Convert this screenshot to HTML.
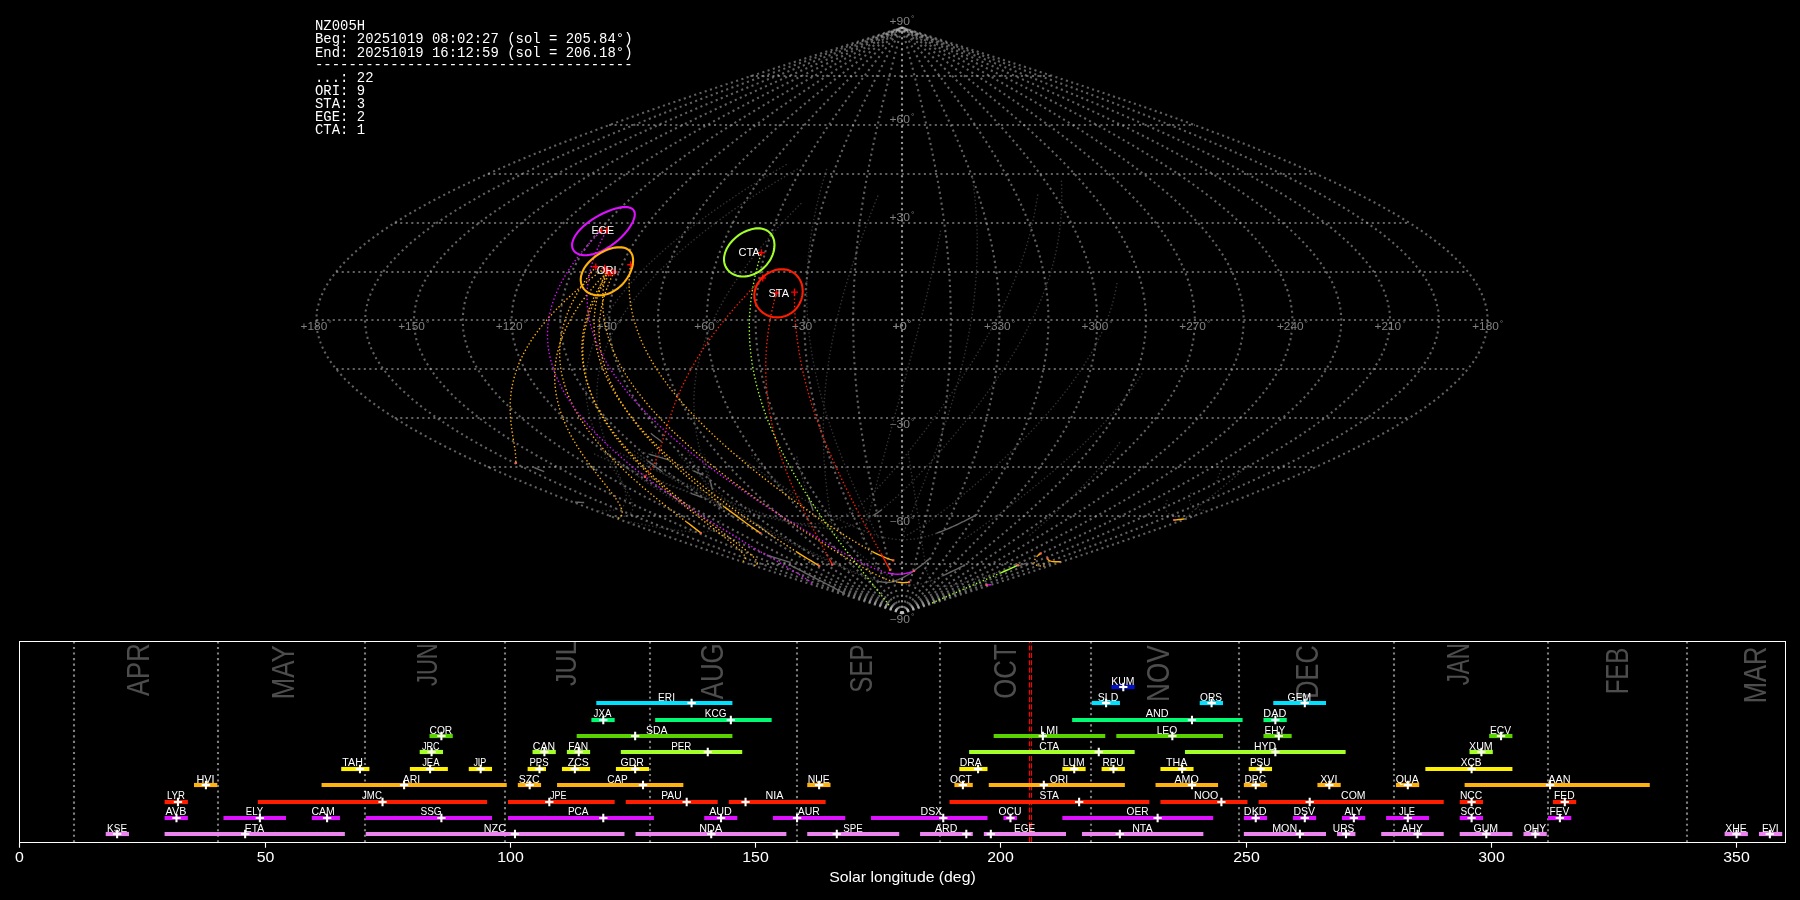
<!DOCTYPE html>
<html><head><meta charset="utf-8"><title>NZ005H shower association</title>
<style>html,body{margin:0;padding:0;background:#000;}svg{display:block}</style></head>
<body><svg width="1800" height="900" viewBox="0 0 1800 900" style="will-change:transform">
<rect width="1800" height="900" fill="#000"/>
<g fill="none" stroke="#c0c0c0" stroke-opacity="0.5" stroke-width="2.083" stroke-dasharray="2.083 3.437">
<path d="M902.00,613.30 L871.34,603.53 L840.77,593.77 L810.36,584.01 L780.21,574.24 L750.39,564.48 L720.98,554.72 L692.07,544.95 L663.74,535.19 L636.06,525.43 L609.10,515.66 L582.95,505.90 L557.68,496.14 L533.35,486.37 L510.03,476.61 L487.78,466.85 L466.67,457.08 L446.75,447.32 L428.08,437.56 L410.71,427.80 L394.69,418.03 L380.06,408.27 L366.85,398.51 L355.12,388.74 L344.88,378.98 L336.17,369.22 L329.01,359.45 L323.42,349.69 L319.42,339.93 L317.01,330.16 L316.21,320.40 L317.01,310.64 L319.42,300.87 L323.42,291.11 L329.01,281.35 L336.17,271.58 L344.88,261.82 L355.12,252.06 L366.85,242.29 L380.06,232.53 L394.69,222.77 L410.71,213.00 L428.08,203.24 L446.75,193.48 L466.67,183.72 L487.78,173.95 L510.03,164.19 L533.35,154.43 L557.68,144.66 L582.95,134.90 L609.10,125.14 L636.06,115.37 L663.74,105.61 L692.07,95.85 L720.98,86.08 L750.39,76.32 L780.21,66.56 L810.36,56.79 L840.77,47.03 L871.34,37.27 L902.00,27.50"/>
<path d="M902.00,613.30 L873.90,603.53 L845.87,593.77 L818.00,584.01 L790.36,574.24 L763.02,564.48 L736.07,554.72 L709.57,544.95 L683.59,535.19 L658.22,525.43 L633.51,515.66 L609.54,505.90 L586.37,496.14 L564.07,486.37 L542.69,476.61 L522.30,466.85 L502.95,457.08 L484.69,447.32 L467.58,437.56 L451.65,427.80 L436.97,418.03 L423.55,408.27 L411.45,398.51 L400.69,388.74 L391.31,378.98 L383.32,369.22 L376.76,359.45 L371.64,349.69 L367.97,339.93 L365.76,330.16 L365.02,320.40 L365.76,310.64 L367.97,300.87 L371.64,291.11 L376.76,281.35 L383.32,271.58 L391.31,261.82 L400.69,252.06 L411.45,242.29 L423.55,232.53 L436.97,222.77 L451.65,213.00 L467.58,203.24 L484.69,193.48 L502.95,183.72 L522.30,173.95 L542.69,164.19 L564.07,154.43 L586.37,144.66 L609.54,134.90 L633.51,125.14 L658.22,115.37 L683.59,105.61 L709.57,95.85 L736.07,86.08 L763.02,76.32 L790.36,66.56 L818.00,56.79 L845.87,47.03 L873.90,37.27 L902.00,27.50"/>
<path d="M902.00,613.30 L876.45,603.53 L850.97,593.77 L825.63,584.01 L800.51,574.24 L775.65,564.48 L751.15,554.72 L727.06,544.95 L703.45,535.19 L680.38,525.43 L657.92,515.66 L636.13,505.90 L615.07,496.14 L594.79,486.37 L575.36,476.61 L556.82,466.85 L539.23,457.08 L522.63,447.32 L507.07,437.56 L492.59,427.80 L479.24,418.03 L467.05,408.27 L456.04,398.51 L446.26,388.74 L437.73,378.98 L430.47,369.22 L424.51,359.45 L419.85,349.69 L416.51,339.93 L414.51,330.16 L413.84,320.40 L414.51,310.64 L416.51,300.87 L419.85,291.11 L424.51,281.35 L430.47,271.58 L437.73,261.82 L446.26,252.06 L456.04,242.29 L467.05,232.53 L479.24,222.77 L492.59,213.00 L507.07,203.24 L522.63,193.48 L539.23,183.72 L556.82,173.95 L575.36,164.19 L594.79,154.43 L615.07,144.66 L636.13,134.90 L657.92,125.14 L680.38,115.37 L703.45,105.61 L727.06,95.85 L751.15,86.08 L775.65,76.32 L800.51,66.56 L825.63,56.79 L850.97,47.03 L876.45,37.27 L902.00,27.50"/>
<path d="M902.00,613.30 L879.01,603.53 L856.08,593.77 L833.27,584.01 L810.66,574.24 L788.29,564.48 L766.24,554.72 L744.55,544.95 L723.30,535.19 L702.54,525.43 L682.33,515.66 L662.72,505.90 L643.76,496.14 L625.51,486.37 L608.02,476.61 L591.34,466.85 L575.50,457.08 L560.57,447.32 L546.56,437.56 L533.54,427.80 L521.52,418.03 L510.54,408.27 L500.64,398.51 L491.84,388.74 L484.16,378.98 L477.63,369.22 L472.26,359.45 L468.07,349.69 L465.06,339.93 L463.26,330.16 L462.66,320.40 L463.26,310.64 L465.06,300.87 L468.07,291.11 L472.26,281.35 L477.63,271.58 L484.16,261.82 L491.84,252.06 L500.64,242.29 L510.54,232.53 L521.52,222.77 L533.54,213.00 L546.56,203.24 L560.57,193.48 L575.50,183.72 L591.34,173.95 L608.02,164.19 L625.51,154.43 L643.76,144.66 L662.72,134.90 L682.33,125.14 L702.54,115.37 L723.30,105.61 L744.55,95.85 L766.24,86.08 L788.29,76.32 L810.66,66.56 L833.27,56.79 L856.08,47.03 L879.01,37.27 L902.00,27.50"/>
<path d="M902.00,613.30 L881.56,603.53 L861.18,593.77 L840.91,584.01 L820.80,574.24 L800.92,564.48 L781.32,554.72 L762.05,544.95 L743.16,535.19 L724.70,525.43 L706.74,515.66 L689.30,505.90 L672.45,496.14 L656.23,486.37 L640.69,476.61 L625.86,466.85 L611.78,457.08 L598.50,447.32 L586.06,437.56 L574.48,427.80 L563.79,418.03 L554.04,408.27 L545.23,398.51 L537.41,388.74 L530.59,378.98 L524.78,369.22 L520.01,359.45 L516.28,349.69 L513.61,339.93 L512.01,330.16 L511.47,320.40 L512.01,310.64 L513.61,300.87 L516.28,291.11 L520.01,281.35 L524.78,271.58 L530.59,261.82 L537.41,252.06 L545.23,242.29 L554.04,232.53 L563.79,222.77 L574.48,213.00 L586.06,203.24 L598.50,193.48 L611.78,183.72 L625.86,173.95 L640.69,164.19 L656.23,154.43 L672.45,144.66 L689.30,134.90 L706.74,125.14 L724.70,115.37 L743.16,105.61 L762.05,95.85 L781.32,86.08 L800.92,76.32 L820.80,66.56 L840.91,56.79 L861.18,47.03 L881.56,37.27 L902.00,27.50"/>
<path d="M902.00,613.30 L884.12,603.53 L866.28,593.77 L848.54,584.01 L830.95,574.24 L813.56,564.48 L796.41,554.72 L779.54,544.95 L763.01,535.19 L746.87,525.43 L731.14,515.66 L715.89,505.90 L701.15,496.14 L686.95,486.37 L673.35,476.61 L660.37,466.85 L648.06,457.08 L636.44,447.32 L625.55,437.56 L615.42,427.80 L606.07,418.03 L597.53,408.27 L589.83,398.51 L582.98,388.74 L577.01,378.98 L571.93,369.22 L567.76,359.45 L564.50,349.69 L562.16,339.93 L560.76,330.16 L560.29,320.40 L560.76,310.64 L562.16,300.87 L564.50,291.11 L567.76,281.35 L571.93,271.58 L577.01,261.82 L582.98,252.06 L589.83,242.29 L597.53,232.53 L606.07,222.77 L615.42,213.00 L625.55,203.24 L636.44,193.48 L648.06,183.72 L660.37,173.95 L673.35,164.19 L686.95,154.43 L701.15,144.66 L715.89,134.90 L731.14,125.14 L746.87,115.37 L763.01,105.61 L779.54,95.85 L796.41,86.08 L813.56,76.32 L830.95,66.56 L848.54,56.79 L866.28,47.03 L884.12,37.27 L902.00,27.50"/>
<path d="M902.00,613.30 L886.67,603.53 L871.38,593.77 L856.18,584.01 L841.10,574.24 L826.19,564.48 L811.49,554.72 L797.04,544.95 L782.87,535.19 L769.03,525.43 L755.55,515.66 L742.48,505.90 L729.84,496.14 L717.67,486.37 L706.01,476.61 L694.89,466.85 L684.34,457.08 L674.38,447.32 L665.04,437.56 L656.36,427.80 L648.34,418.03 L641.03,408.27 L634.43,398.51 L628.56,388.74 L623.44,378.98 L619.08,369.22 L615.50,359.45 L612.71,349.69 L610.71,339.93 L609.51,330.16 L609.10,320.40 L609.51,310.64 L610.71,300.87 L612.71,291.11 L615.50,281.35 L619.08,271.58 L623.44,261.82 L628.56,252.06 L634.43,242.29 L641.03,232.53 L648.34,222.77 L656.36,213.00 L665.04,203.24 L674.38,193.48 L684.34,183.72 L694.89,173.95 L706.01,164.19 L717.67,154.43 L729.84,144.66 L742.48,134.90 L755.55,125.14 L769.03,115.37 L782.87,105.61 L797.04,95.85 L811.49,86.08 L826.19,76.32 L841.10,66.56 L856.18,56.79 L871.38,47.03 L886.67,37.27 L902.00,27.50"/>
<path d="M902.00,613.30 L889.23,603.53 L876.49,593.77 L863.82,584.01 L851.25,574.24 L838.83,564.48 L826.58,554.72 L814.53,544.95 L802.72,535.19 L791.19,525.43 L779.96,515.66 L769.06,505.90 L758.53,496.14 L748.40,486.37 L738.68,476.61 L729.41,466.85 L720.61,457.08 L712.31,447.32 L704.54,437.56 L697.30,427.80 L690.62,418.03 L684.52,408.27 L679.02,398.51 L674.13,388.74 L669.87,378.98 L666.24,369.22 L663.25,359.45 L660.93,349.69 L659.26,339.93 L658.25,330.16 L657.92,320.40 L658.25,310.64 L659.26,300.87 L660.93,291.11 L663.25,281.35 L666.24,271.58 L669.87,261.82 L674.13,252.06 L679.02,242.29 L684.52,232.53 L690.62,222.77 L697.30,213.00 L704.54,203.24 L712.31,193.48 L720.61,183.72 L729.41,173.95 L738.68,164.19 L748.40,154.43 L758.53,144.66 L769.06,134.90 L779.96,125.14 L791.19,115.37 L802.72,105.61 L814.53,95.85 L826.58,86.08 L838.83,76.32 L851.25,66.56 L863.82,56.79 L876.49,47.03 L889.23,37.27 L902.00,27.50"/>
<path d="M902.00,613.30 L891.78,603.53 L881.59,593.77 L871.45,584.01 L861.40,574.24 L851.46,564.48 L841.66,554.72 L832.02,544.95 L822.58,535.19 L813.35,525.43 L804.37,515.66 L795.65,505.90 L787.23,496.14 L779.12,486.37 L771.34,476.61 L763.93,466.85 L756.89,457.08 L750.25,447.32 L744.03,437.56 L738.24,427.80 L732.90,418.03 L728.02,408.27 L723.62,398.51 L719.71,388.74 L716.29,378.98 L713.39,369.22 L711.00,359.45 L709.14,349.69 L707.81,339.93 L707.00,330.16 L706.74,320.40 L707.00,310.64 L707.81,300.87 L709.14,291.11 L711.00,281.35 L713.39,271.58 L716.29,261.82 L719.71,252.06 L723.62,242.29 L728.02,232.53 L732.90,222.77 L738.24,213.00 L744.03,203.24 L750.25,193.48 L756.89,183.72 L763.93,173.95 L771.34,164.19 L779.12,154.43 L787.23,144.66 L795.65,134.90 L804.37,125.14 L813.35,115.37 L822.58,105.61 L832.02,95.85 L841.66,86.08 L851.46,76.32 L861.40,66.56 L871.45,56.79 L881.59,47.03 L891.78,37.27 L902.00,27.50"/>
<path d="M902.00,613.30 L894.34,603.53 L886.69,593.77 L879.09,584.01 L871.55,574.24 L864.10,564.48 L856.75,554.72 L849.52,544.95 L842.43,535.19 L835.51,525.43 L828.78,515.66 L822.24,505.90 L815.92,496.14 L809.84,486.37 L804.01,476.61 L798.45,466.85 L793.17,457.08 L788.19,447.32 L783.52,437.56 L779.18,427.80 L775.17,418.03 L771.51,408.27 L768.21,398.51 L765.28,388.74 L762.72,378.98 L760.54,369.22 L758.75,359.45 L757.36,349.69 L756.35,339.93 L755.75,330.16 L755.55,320.40 L755.75,310.64 L756.35,300.87 L757.36,291.11 L758.75,281.35 L760.54,271.58 L762.72,261.82 L765.28,252.06 L768.21,242.29 L771.51,232.53 L775.17,222.77 L779.18,213.00 L783.52,203.24 L788.19,193.48 L793.17,183.72 L798.45,173.95 L804.01,164.19 L809.84,154.43 L815.92,144.66 L822.24,134.90 L828.78,125.14 L835.51,115.37 L842.43,105.61 L849.52,95.85 L856.75,86.08 L864.10,76.32 L871.55,66.56 L879.09,56.79 L886.69,47.03 L894.34,37.27 L902.00,27.50"/>
<path d="M902.00,613.30 L896.89,603.53 L891.79,593.77 L886.73,584.01 L881.70,574.24 L876.73,564.48 L871.83,554.72 L867.01,544.95 L862.29,535.19 L857.68,525.43 L853.18,515.66 L848.83,505.90 L844.61,496.14 L840.56,486.37 L836.67,476.61 L832.96,466.85 L829.45,457.08 L826.13,447.32 L823.01,437.56 L820.12,427.80 L817.45,418.03 L815.01,408.27 L812.81,398.51 L810.85,388.74 L809.15,378.98 L807.69,369.22 L806.50,359.45 L805.57,349.69 L804.90,339.93 L804.50,330.16 L804.37,320.40 L804.50,310.64 L804.90,300.87 L805.57,291.11 L806.50,281.35 L807.69,271.58 L809.15,261.82 L810.85,252.06 L812.81,242.29 L815.01,232.53 L817.45,222.77 L820.12,213.00 L823.01,203.24 L826.13,193.48 L829.45,183.72 L832.96,173.95 L836.67,164.19 L840.56,154.43 L844.61,144.66 L848.83,134.90 L853.18,125.14 L857.68,115.37 L862.29,105.61 L867.01,95.85 L871.83,86.08 L876.73,76.32 L881.70,66.56 L886.73,56.79 L891.79,47.03 L896.89,37.27 L902.00,27.50"/>
<path d="M902.00,613.30 L899.45,603.53 L896.90,593.77 L894.36,584.01 L891.85,574.24 L889.37,564.48 L886.92,554.72 L884.51,544.95 L882.14,535.19 L879.84,525.43 L877.59,515.66 L875.41,505.90 L873.31,496.14 L871.28,486.37 L869.34,476.61 L867.48,466.85 L865.72,457.08 L864.06,447.32 L862.51,437.56 L861.06,427.80 L859.72,418.03 L858.50,408.27 L857.40,398.51 L856.43,388.74 L855.57,378.98 L854.85,369.22 L854.25,359.45 L853.79,349.69 L853.45,339.93 L853.25,330.16 L853.18,320.40 L853.25,310.64 L853.45,300.87 L853.79,291.11 L854.25,281.35 L854.85,271.58 L855.57,261.82 L856.43,252.06 L857.40,242.29 L858.50,232.53 L859.72,222.77 L861.06,213.00 L862.51,203.24 L864.06,193.48 L865.72,183.72 L867.48,173.95 L869.34,164.19 L871.28,154.43 L873.31,144.66 L875.41,134.90 L877.59,125.14 L879.84,115.37 L882.14,105.61 L884.51,95.85 L886.92,86.08 L889.37,76.32 L891.85,66.56 L894.36,56.79 L896.90,47.03 L899.45,37.27 L902.00,27.50"/>
<path d="M902.00,613.30 L902.00,603.53 L902.00,593.77 L902.00,584.01 L902.00,574.24 L902.00,564.48 L902.00,554.72 L902.00,544.95 L902.00,535.19 L902.00,525.43 L902.00,515.66 L902.00,505.90 L902.00,496.14 L902.00,486.37 L902.00,476.61 L902.00,466.85 L902.00,457.08 L902.00,447.32 L902.00,437.56 L902.00,427.80 L902.00,418.03 L902.00,408.27 L902.00,398.51 L902.00,388.74 L902.00,378.98 L902.00,369.22 L902.00,359.45 L902.00,349.69 L902.00,339.93 L902.00,330.16 L902.00,320.40 L902.00,310.64 L902.00,300.87 L902.00,291.11 L902.00,281.35 L902.00,271.58 L902.00,261.82 L902.00,252.06 L902.00,242.29 L902.00,232.53 L902.00,222.77 L902.00,213.00 L902.00,203.24 L902.00,193.48 L902.00,183.72 L902.00,173.95 L902.00,164.19 L902.00,154.43 L902.00,144.66 L902.00,134.90 L902.00,125.14 L902.00,115.37 L902.00,105.61 L902.00,95.85 L902.00,86.08 L902.00,76.32 L902.00,66.56 L902.00,56.79 L902.00,47.03 L902.00,37.27 L902.00,27.50"/>
<path d="M902.00,613.30 L904.55,603.53 L907.10,593.77 L909.64,584.01 L912.15,574.24 L914.63,564.48 L917.08,554.72 L919.49,544.95 L921.86,535.19 L924.16,525.43 L926.41,515.66 L928.59,505.90 L930.69,496.14 L932.72,486.37 L934.66,476.61 L936.52,466.85 L938.28,457.08 L939.94,447.32 L941.49,437.56 L942.94,427.80 L944.28,418.03 L945.50,408.27 L946.60,398.51 L947.57,388.74 L948.43,378.98 L949.15,369.22 L949.75,359.45 L950.21,349.69 L950.55,339.93 L950.75,330.16 L950.82,320.40 L950.75,310.64 L950.55,300.87 L950.21,291.11 L949.75,281.35 L949.15,271.58 L948.43,261.82 L947.57,252.06 L946.60,242.29 L945.50,232.53 L944.28,222.77 L942.94,213.00 L941.49,203.24 L939.94,193.48 L938.28,183.72 L936.52,173.95 L934.66,164.19 L932.72,154.43 L930.69,144.66 L928.59,134.90 L926.41,125.14 L924.16,115.37 L921.86,105.61 L919.49,95.85 L917.08,86.08 L914.63,76.32 L912.15,66.56 L909.64,56.79 L907.10,47.03 L904.55,37.27 L902.00,27.50"/>
<path d="M902.00,613.30 L907.11,603.53 L912.21,593.77 L917.27,584.01 L922.30,574.24 L927.27,564.48 L932.17,554.72 L936.99,544.95 L941.71,535.19 L946.32,525.43 L950.82,515.66 L955.17,505.90 L959.39,496.14 L963.44,486.37 L967.33,476.61 L971.04,466.85 L974.55,457.08 L977.87,447.32 L980.99,437.56 L983.88,427.80 L986.55,418.03 L988.99,408.27 L991.19,398.51 L993.15,388.74 L994.85,378.98 L996.31,369.22 L997.50,359.45 L998.43,349.69 L999.10,339.93 L999.50,330.16 L999.63,320.40 L999.50,310.64 L999.10,300.87 L998.43,291.11 L997.50,281.35 L996.31,271.58 L994.85,261.82 L993.15,252.06 L991.19,242.29 L988.99,232.53 L986.55,222.77 L983.88,213.00 L980.99,203.24 L977.87,193.48 L974.55,183.72 L971.04,173.95 L967.33,164.19 L963.44,154.43 L959.39,144.66 L955.17,134.90 L950.82,125.14 L946.32,115.37 L941.71,105.61 L936.99,95.85 L932.17,86.08 L927.27,76.32 L922.30,66.56 L917.27,56.79 L912.21,47.03 L907.11,37.27 L902.00,27.50"/>
<path d="M902.00,613.30 L909.66,603.53 L917.31,593.77 L924.91,584.01 L932.45,574.24 L939.90,564.48 L947.25,554.72 L954.48,544.95 L961.57,535.19 L968.49,525.43 L975.22,515.66 L981.76,505.90 L988.08,496.14 L994.16,486.37 L999.99,476.61 L1005.55,466.85 L1010.83,457.08 L1015.81,447.32 L1020.48,437.56 L1024.82,427.80 L1028.83,418.03 L1032.49,408.27 L1035.79,398.51 L1038.72,388.74 L1041.28,378.98 L1043.46,369.22 L1045.25,359.45 L1046.64,349.69 L1047.65,339.93 L1048.25,330.16 L1048.45,320.40 L1048.25,310.64 L1047.65,300.87 L1046.64,291.11 L1045.25,281.35 L1043.46,271.58 L1041.28,261.82 L1038.72,252.06 L1035.79,242.29 L1032.49,232.53 L1028.83,222.77 L1024.82,213.00 L1020.48,203.24 L1015.81,193.48 L1010.83,183.72 L1005.55,173.95 L999.99,164.19 L994.16,154.43 L988.08,144.66 L981.76,134.90 L975.22,125.14 L968.49,115.37 L961.57,105.61 L954.48,95.85 L947.25,86.08 L939.90,76.32 L932.45,66.56 L924.91,56.79 L917.31,47.03 L909.66,37.27 L902.00,27.50"/>
<path d="M902.00,613.30 L912.22,603.53 L922.41,593.77 L932.55,584.01 L942.60,574.24 L952.54,564.48 L962.34,554.72 L971.98,544.95 L981.42,535.19 L990.65,525.43 L999.63,515.66 L1008.35,505.90 L1016.77,496.14 L1024.88,486.37 L1032.66,476.61 L1040.07,466.85 L1047.11,457.08 L1053.75,447.32 L1059.97,437.56 L1065.76,427.80 L1071.10,418.03 L1075.98,408.27 L1080.38,398.51 L1084.29,388.74 L1087.71,378.98 L1090.61,369.22 L1093.00,359.45 L1094.86,349.69 L1096.19,339.93 L1097.00,330.16 L1097.26,320.40 L1097.00,310.64 L1096.19,300.87 L1094.86,291.11 L1093.00,281.35 L1090.61,271.58 L1087.71,261.82 L1084.29,252.06 L1080.38,242.29 L1075.98,232.53 L1071.10,222.77 L1065.76,213.00 L1059.97,203.24 L1053.75,193.48 L1047.11,183.72 L1040.07,173.95 L1032.66,164.19 L1024.88,154.43 L1016.77,144.66 L1008.35,134.90 L999.63,125.14 L990.65,115.37 L981.42,105.61 L971.98,95.85 L962.34,86.08 L952.54,76.32 L942.60,66.56 L932.55,56.79 L922.41,47.03 L912.22,37.27 L902.00,27.50"/>
<path d="M902.00,613.30 L914.77,603.53 L927.51,593.77 L940.18,584.01 L952.75,574.24 L965.17,564.48 L977.42,554.72 L989.47,544.95 L1001.28,535.19 L1012.81,525.43 L1024.04,515.66 L1034.94,505.90 L1045.47,496.14 L1055.60,486.37 L1065.32,476.61 L1074.59,466.85 L1083.39,457.08 L1091.69,447.32 L1099.46,437.56 L1106.70,427.80 L1113.38,418.03 L1119.48,408.27 L1124.98,398.51 L1129.87,388.74 L1134.13,378.98 L1137.76,369.22 L1140.75,359.45 L1143.07,349.69 L1144.74,339.93 L1145.75,330.16 L1146.08,320.40 L1145.75,310.64 L1144.74,300.87 L1143.07,291.11 L1140.75,281.35 L1137.76,271.58 L1134.13,261.82 L1129.87,252.06 L1124.98,242.29 L1119.48,232.53 L1113.38,222.77 L1106.70,213.00 L1099.46,203.24 L1091.69,193.48 L1083.39,183.72 L1074.59,173.95 L1065.32,164.19 L1055.60,154.43 L1045.47,144.66 L1034.94,134.90 L1024.04,125.14 L1012.81,115.37 L1001.28,105.61 L989.47,95.85 L977.42,86.08 L965.17,76.32 L952.75,66.56 L940.18,56.79 L927.51,47.03 L914.77,37.27 L902.00,27.50"/>
<path d="M902.00,613.30 L917.33,603.53 L932.62,593.77 L947.82,584.01 L962.90,574.24 L977.81,564.48 L992.51,554.72 L1006.96,544.95 L1021.13,535.19 L1034.97,525.43 L1048.45,515.66 L1061.52,505.90 L1074.16,496.14 L1086.33,486.37 L1097.99,476.61 L1109.11,466.85 L1119.66,457.08 L1129.62,447.32 L1138.96,437.56 L1147.64,427.80 L1155.66,418.03 L1162.97,408.27 L1169.57,398.51 L1175.44,388.74 L1180.56,378.98 L1184.92,369.22 L1188.50,359.45 L1191.29,349.69 L1193.29,339.93 L1194.49,330.16 L1194.90,320.40 L1194.49,310.64 L1193.29,300.87 L1191.29,291.11 L1188.50,281.35 L1184.92,271.58 L1180.56,261.82 L1175.44,252.06 L1169.57,242.29 L1162.97,232.53 L1155.66,222.77 L1147.64,213.00 L1138.96,203.24 L1129.62,193.48 L1119.66,183.72 L1109.11,173.95 L1097.99,164.19 L1086.33,154.43 L1074.16,144.66 L1061.52,134.90 L1048.45,125.14 L1034.97,115.37 L1021.13,105.61 L1006.96,95.85 L992.51,86.08 L977.81,76.32 L962.90,66.56 L947.82,56.79 L932.62,47.03 L917.33,37.27 L902.00,27.50"/>
<path d="M902.00,613.30 L919.88,603.53 L937.72,593.77 L955.46,584.01 L973.05,574.24 L990.44,564.48 L1007.59,554.72 L1024.46,544.95 L1040.99,535.19 L1057.13,525.43 L1072.86,515.66 L1088.11,505.90 L1102.85,496.14 L1117.05,486.37 L1130.65,476.61 L1143.63,466.85 L1155.94,457.08 L1167.56,447.32 L1178.45,437.56 L1188.58,427.80 L1197.93,418.03 L1206.47,408.27 L1214.17,398.51 L1221.02,388.74 L1226.99,378.98 L1232.07,369.22 L1236.24,359.45 L1239.50,349.69 L1241.84,339.93 L1243.24,330.16 L1243.71,320.40 L1243.24,310.64 L1241.84,300.87 L1239.50,291.11 L1236.24,281.35 L1232.07,271.58 L1226.99,261.82 L1221.02,252.06 L1214.17,242.29 L1206.47,232.53 L1197.93,222.77 L1188.58,213.00 L1178.45,203.24 L1167.56,193.48 L1155.94,183.72 L1143.63,173.95 L1130.65,164.19 L1117.05,154.43 L1102.85,144.66 L1088.11,134.90 L1072.86,125.14 L1057.13,115.37 L1040.99,105.61 L1024.46,95.85 L1007.59,86.08 L990.44,76.32 L973.05,66.56 L955.46,56.79 L937.72,47.03 L919.88,37.27 L902.00,27.50"/>
<path d="M902.00,613.30 L922.44,603.53 L942.82,593.77 L963.09,584.01 L983.20,574.24 L1003.08,564.48 L1022.68,554.72 L1041.95,544.95 L1060.84,535.19 L1079.30,525.43 L1097.26,515.66 L1114.70,505.90 L1131.55,496.14 L1147.77,486.37 L1163.31,476.61 L1178.14,466.85 L1192.22,457.08 L1205.50,447.32 L1217.94,437.56 L1229.52,427.80 L1240.21,418.03 L1249.96,408.27 L1258.77,398.51 L1266.59,388.74 L1273.41,378.98 L1279.22,369.22 L1283.99,359.45 L1287.72,349.69 L1290.39,339.93 L1291.99,330.16 L1292.53,320.40 L1291.99,310.64 L1290.39,300.87 L1287.72,291.11 L1283.99,281.35 L1279.22,271.58 L1273.41,261.82 L1266.59,252.06 L1258.77,242.29 L1249.96,232.53 L1240.21,222.77 L1229.52,213.00 L1217.94,203.24 L1205.50,193.48 L1192.22,183.72 L1178.14,173.95 L1163.31,164.19 L1147.77,154.43 L1131.55,144.66 L1114.70,134.90 L1097.26,125.14 L1079.30,115.37 L1060.84,105.61 L1041.95,95.85 L1022.68,86.08 L1003.08,76.32 L983.20,66.56 L963.09,56.79 L942.82,47.03 L922.44,37.27 L902.00,27.50"/>
<path d="M902.00,613.30 L924.99,603.53 L947.92,593.77 L970.73,584.01 L993.34,574.24 L1015.71,564.48 L1037.76,554.72 L1059.45,544.95 L1080.70,535.19 L1101.46,525.43 L1121.67,515.66 L1141.28,505.90 L1160.24,496.14 L1178.49,486.37 L1195.98,476.61 L1212.66,466.85 L1228.50,457.08 L1243.43,447.32 L1257.44,437.56 L1270.46,427.80 L1282.48,418.03 L1293.46,408.27 L1303.36,398.51 L1312.16,388.74 L1319.84,378.98 L1326.37,369.22 L1331.74,359.45 L1335.93,349.69 L1338.94,339.93 L1340.74,330.16 L1341.34,320.40 L1340.74,310.64 L1338.94,300.87 L1335.93,291.11 L1331.74,281.35 L1326.37,271.58 L1319.84,261.82 L1312.16,252.06 L1303.36,242.29 L1293.46,232.53 L1282.48,222.77 L1270.46,213.00 L1257.44,203.24 L1243.43,193.48 L1228.50,183.72 L1212.66,173.95 L1195.98,164.19 L1178.49,154.43 L1160.24,144.66 L1141.28,134.90 L1121.67,125.14 L1101.46,115.37 L1080.70,105.61 L1059.45,95.85 L1037.76,86.08 L1015.71,76.32 L993.34,66.56 L970.73,56.79 L947.92,47.03 L924.99,37.27 L902.00,27.50"/>
<path d="M902.00,613.30 L927.55,603.53 L953.03,593.77 L978.37,584.01 L1003.49,574.24 L1028.35,564.48 L1052.85,554.72 L1076.94,544.95 L1100.55,535.19 L1123.62,525.43 L1146.08,515.66 L1167.87,505.90 L1188.93,496.14 L1209.21,486.37 L1228.64,476.61 L1247.18,466.85 L1264.77,457.08 L1281.37,447.32 L1296.93,437.56 L1311.41,427.80 L1324.76,418.03 L1336.95,408.27 L1347.96,398.51 L1357.74,388.74 L1366.27,378.98 L1373.53,369.22 L1379.49,359.45 L1384.15,349.69 L1387.49,339.93 L1389.49,330.16 L1390.16,320.40 L1389.49,310.64 L1387.49,300.87 L1384.15,291.11 L1379.49,281.35 L1373.53,271.58 L1366.27,261.82 L1357.74,252.06 L1347.96,242.29 L1336.95,232.53 L1324.76,222.77 L1311.41,213.00 L1296.93,203.24 L1281.37,193.48 L1264.77,183.72 L1247.18,173.95 L1228.64,164.19 L1209.21,154.43 L1188.93,144.66 L1167.87,134.90 L1146.08,125.14 L1123.62,115.37 L1100.55,105.61 L1076.94,95.85 L1052.85,86.08 L1028.35,76.32 L1003.49,66.56 L978.37,56.79 L953.03,47.03 L927.55,37.27 L902.00,27.50"/>
<path d="M902.00,613.30 L930.10,603.53 L958.13,593.77 L986.00,584.01 L1013.64,574.24 L1040.98,564.48 L1067.93,554.72 L1094.43,544.95 L1120.41,535.19 L1145.78,525.43 L1170.49,515.66 L1194.46,505.90 L1217.63,496.14 L1239.93,486.37 L1261.31,476.61 L1281.70,466.85 L1301.05,457.08 L1319.31,447.32 L1336.42,437.56 L1352.35,427.80 L1367.03,418.03 L1380.45,408.27 L1392.55,398.51 L1403.31,388.74 L1412.69,378.98 L1420.68,369.22 L1427.24,359.45 L1432.36,349.69 L1436.03,339.93 L1438.24,330.16 L1438.98,320.40 L1438.24,310.64 L1436.03,300.87 L1432.36,291.11 L1427.24,281.35 L1420.68,271.58 L1412.69,261.82 L1403.31,252.06 L1392.55,242.29 L1380.45,232.53 L1367.03,222.77 L1352.35,213.00 L1336.42,203.24 L1319.31,193.48 L1301.05,183.72 L1281.70,173.95 L1261.31,164.19 L1239.93,154.43 L1217.63,144.66 L1194.46,134.90 L1170.49,125.14 L1145.78,115.37 L1120.41,105.61 L1094.43,95.85 L1067.93,86.08 L1040.98,76.32 L1013.64,66.56 L986.00,56.79 L958.13,47.03 L930.10,37.27 L902.00,27.50"/>
<path d="M902.00,613.30 L932.66,603.53 L963.23,593.77 L993.64,584.01 L1023.79,574.24 L1053.61,564.48 L1083.02,554.72 L1111.93,544.95 L1140.26,535.19 L1167.94,525.43 L1194.90,515.66 L1221.05,505.90 L1246.32,496.14 L1270.65,486.37 L1293.97,476.61 L1316.22,466.85 L1337.33,457.08 L1357.25,447.32 L1375.92,437.56 L1393.29,427.80 L1409.31,418.03 L1423.94,408.27 L1437.15,398.51 L1448.88,388.74 L1459.12,378.98 L1467.83,369.22 L1474.99,359.45 L1480.58,349.69 L1484.58,339.93 L1486.99,330.16 L1487.79,320.40 L1486.99,310.64 L1484.58,300.87 L1480.58,291.11 L1474.99,281.35 L1467.83,271.58 L1459.12,261.82 L1448.88,252.06 L1437.15,242.29 L1423.94,232.53 L1409.31,222.77 L1393.29,213.00 L1375.92,203.24 L1357.25,193.48 L1337.33,183.72 L1316.22,173.95 L1293.97,164.19 L1270.65,154.43 L1246.32,144.66 L1221.05,134.90 L1194.90,125.14 L1167.94,115.37 L1140.26,105.61 L1111.93,95.85 L1083.02,86.08 L1053.61,76.32 L1023.79,66.56 L993.64,56.79 L963.23,47.03 L932.66,37.27 L902.00,27.50"/>
<path d="M902.00,613.30 L902.00,603.53 L902.00,593.77 L902.00,584.01 L902.00,574.24 L902.00,564.48 L902.00,554.72 L902.00,544.95 L902.00,535.19 L902.00,525.43 L902.00,515.66 L902.00,505.90 L902.00,496.14 L902.00,486.37 L902.00,476.61 L902.00,466.85 L902.00,457.08 L902.00,447.32 L902.00,437.56 L902.00,427.80 L902.00,418.03 L902.00,408.27 L902.00,398.51 L902.00,388.74 L902.00,378.98 L902.00,369.22 L902.00,359.45 L902.00,349.69 L902.00,339.93 L902.00,330.16 L902.00,320.40 L902.00,310.64 L902.00,300.87 L902.00,291.11 L902.00,281.35 L902.00,271.58 L902.00,261.82 L902.00,252.06 L902.00,242.29 L902.00,232.53 L902.00,222.77 L902.00,213.00 L902.00,203.24 L902.00,193.48 L902.00,183.72 L902.00,173.95 L902.00,164.19 L902.00,154.43 L902.00,144.66 L902.00,134.90 L902.00,125.14 L902.00,115.37 L902.00,105.61 L902.00,95.85 L902.00,86.08 L902.00,76.32 L902.00,66.56 L902.00,56.79 L902.00,47.03 L902.00,37.27 L902.00,27.50" stroke-opacity="0.5"/>
<path d="M750.39,564.00 L1053.61,564.00"/>
<path d="M609.10,516.00 L1194.90,516.00"/>
<path d="M487.78,467.00 L1316.22,467.00"/>
<path d="M394.69,418.00 L1409.31,418.00"/>
<path d="M336.17,369.00 L1467.83,369.00"/>
<path d="M316.21,320.00 L1487.79,320.00"/>
<path d="M336.17,272.00 L1467.83,272.00"/>
<path d="M394.69,223.00 L1409.31,223.00"/>
<path d="M487.78,174.00 L1316.22,174.00"/>
<path d="M609.10,125.00 L1194.90,125.00"/>
<path d="M750.39,76.00 L1053.61,76.00"/>
</g>
<text transform="translate(889.44,622.90) translate(0.00,0) scale(1.2441,1.0596)" font-family="'Liberation Sans',sans-serif" font-size="9.72" fill="#808080">−90</text>
<text transform="translate(910.96,619.30) translate(0.00,0) scale(1.2500,1.0596)" font-family="'Liberation Sans',sans-serif" font-size="6.94" fill="#808080">°</text>
<text transform="translate(889.44,525.26) translate(0.00,0) scale(1.2441,1.0596)" font-family="'Liberation Sans',sans-serif" font-size="9.72" fill="#808080">−60</text>
<text transform="translate(910.96,521.66) translate(0.00,0) scale(1.2500,1.0596)" font-family="'Liberation Sans',sans-serif" font-size="6.94" fill="#808080">°</text>
<text transform="translate(889.44,427.63) translate(0.00,0) scale(1.2441,1.0596)" font-family="'Liberation Sans',sans-serif" font-size="9.72" fill="#808080">−30</text>
<text transform="translate(910.96,424.03) translate(0.00,0) scale(1.2500,1.0596)" font-family="'Liberation Sans',sans-serif" font-size="6.94" fill="#808080">°</text>
<text transform="translate(892.53,330.00) translate(0.00,0) scale(1.2930,1.0596)" font-family="'Liberation Sans',sans-serif" font-size="9.72" fill="#808080">+0</text>
<text transform="translate(907.87,326.40) translate(0.00,0) scale(1.2500,1.0596)" font-family="'Liberation Sans',sans-serif" font-size="6.94" fill="#808080">°</text>
<text transform="translate(889.44,220.67) translate(0.00,0) scale(1.2441,1.0596)" font-family="'Liberation Sans',sans-serif" font-size="9.72" fill="#808080">+30</text>
<text transform="translate(910.96,217.07) translate(0.00,0) scale(1.2500,1.0596)" font-family="'Liberation Sans',sans-serif" font-size="6.94" fill="#808080">°</text>
<text transform="translate(889.44,123.04) translate(0.00,0) scale(1.2441,1.0596)" font-family="'Liberation Sans',sans-serif" font-size="9.72" fill="#808080">+60</text>
<text transform="translate(910.96,119.44) translate(0.00,0) scale(1.2500,1.0596)" font-family="'Liberation Sans',sans-serif" font-size="6.94" fill="#808080">°</text>
<text transform="translate(889.44,24.50) translate(0.00,0) scale(1.2441,1.0596)" font-family="'Liberation Sans',sans-serif" font-size="9.72" fill="#808080">+90</text>
<text transform="translate(910.96,20.90) translate(0.00,0) scale(1.2500,1.0596)" font-family="'Liberation Sans',sans-serif" font-size="6.94" fill="#808080">°</text>
<text transform="translate(300.56,330.00) translate(0.00,0) scale(1.2198,1.0596)" font-family="'Liberation Sans',sans-serif" font-size="9.72" fill="#808080">+180</text>
<text transform="translate(328.26,326.40) translate(0.00,0) scale(1.2500,1.0596)" font-family="'Liberation Sans',sans-serif" font-size="6.94" fill="#808080">°</text>
<text transform="translate(398.19,330.00) translate(0.00,0) scale(1.2198,1.0596)" font-family="'Liberation Sans',sans-serif" font-size="9.72" fill="#808080">+150</text>
<text transform="translate(425.89,326.40) translate(0.00,0) scale(1.2500,1.0596)" font-family="'Liberation Sans',sans-serif" font-size="6.94" fill="#808080">°</text>
<text transform="translate(495.82,330.00) translate(0.00,0) scale(1.2198,1.0596)" font-family="'Liberation Sans',sans-serif" font-size="9.72" fill="#808080">+120</text>
<text transform="translate(523.52,326.40) translate(0.00,0) scale(1.2500,1.0596)" font-family="'Liberation Sans',sans-serif" font-size="6.94" fill="#808080">°</text>
<text transform="translate(596.55,330.00) translate(0.00,0) scale(1.2441,1.0596)" font-family="'Liberation Sans',sans-serif" font-size="9.72" fill="#808080">+90</text>
<text transform="translate(618.06,326.40) translate(0.00,0) scale(1.2500,1.0596)" font-family="'Liberation Sans',sans-serif" font-size="6.94" fill="#808080">°</text>
<text transform="translate(694.18,330.00) translate(0.00,0) scale(1.2441,1.0596)" font-family="'Liberation Sans',sans-serif" font-size="9.72" fill="#808080">+60</text>
<text transform="translate(715.69,326.40) translate(0.00,0) scale(1.2500,1.0596)" font-family="'Liberation Sans',sans-serif" font-size="6.94" fill="#808080">°</text>
<text transform="translate(791.81,330.00) translate(0.00,0) scale(1.2441,1.0596)" font-family="'Liberation Sans',sans-serif" font-size="9.72" fill="#808080">+30</text>
<text transform="translate(813.33,326.40) translate(0.00,0) scale(1.2500,1.0596)" font-family="'Liberation Sans',sans-serif" font-size="6.94" fill="#808080">°</text>
<text transform="translate(892.53,330.00) translate(0.00,0) scale(1.2930,1.0596)" font-family="'Liberation Sans',sans-serif" font-size="9.72" fill="#808080">+0</text>
<text transform="translate(907.87,326.40) translate(0.00,0) scale(1.2500,1.0596)" font-family="'Liberation Sans',sans-serif" font-size="6.94" fill="#808080">°</text>
<text transform="translate(983.98,330.00) translate(0.00,0) scale(1.2198,1.0596)" font-family="'Liberation Sans',sans-serif" font-size="9.72" fill="#808080">+330</text>
<text transform="translate(1011.68,326.40) translate(0.00,0) scale(1.2500,1.0596)" font-family="'Liberation Sans',sans-serif" font-size="6.94" fill="#808080">°</text>
<text transform="translate(1081.61,330.00) translate(0.00,0) scale(1.2198,1.0596)" font-family="'Liberation Sans',sans-serif" font-size="9.72" fill="#808080">+300</text>
<text transform="translate(1109.32,326.40) translate(0.00,0) scale(1.2500,1.0596)" font-family="'Liberation Sans',sans-serif" font-size="6.94" fill="#808080">°</text>
<text transform="translate(1179.24,330.00) translate(0.00,0) scale(1.2198,1.0596)" font-family="'Liberation Sans',sans-serif" font-size="9.72" fill="#808080">+270</text>
<text transform="translate(1206.95,326.40) translate(0.00,0) scale(1.2500,1.0596)" font-family="'Liberation Sans',sans-serif" font-size="6.94" fill="#808080">°</text>
<text transform="translate(1276.88,330.00) translate(0.00,0) scale(1.2198,1.0596)" font-family="'Liberation Sans',sans-serif" font-size="9.72" fill="#808080">+240</text>
<text transform="translate(1304.58,326.40) translate(0.00,0) scale(1.2500,1.0596)" font-family="'Liberation Sans',sans-serif" font-size="6.94" fill="#808080">°</text>
<text transform="translate(1374.51,330.00) translate(0.00,0) scale(1.2198,1.0596)" font-family="'Liberation Sans',sans-serif" font-size="9.72" fill="#808080">+210</text>
<text transform="translate(1402.21,326.40) translate(0.00,0) scale(1.2500,1.0596)" font-family="'Liberation Sans',sans-serif" font-size="6.94" fill="#808080">°</text>
<text transform="translate(1472.14,330.00) translate(0.00,0) scale(1.2198,1.0596)" font-family="'Liberation Sans',sans-serif" font-size="9.72" fill="#808080">+180</text>
<text transform="translate(1499.84,326.40) translate(0.00,0) scale(1.2500,1.0596)" font-family="'Liberation Sans',sans-serif" font-size="6.94" fill="#808080">°</text>
<path d="M873.3,515.5 L869.1,518.0 L864.8,520.3 L860.5,522.3 L856.0,524.1 L851.4,525.6 L846.7,526.7 L841.7,527.6 L836.6,528.1 L831.2,528.3 L825.5,528.1 L819.6,527.6 L813.4,526.8 L806.9,525.7 L800.1,524.3 L792.9,522.5 L785.5,520.6 L777.8,518.3 L769.9,515.8 L761.7,513.1 L753.2,510.2 L744.6,507.1 L735.8,503.8 L726.8,500.3 L717.7,496.8 L708.5,493.1 L699.2,489.2 L689.9,485.3 L680.5,481.3 L671.1,477.2 L661.7,473.0 L652.3,468.7 L643.0,464.4 L633.7,460.0 L624.5,455.5 L615.4,451.0 M936.3,533.3 L930.4,535.3 L924.6,536.9 L918.9,538.2 L913.3,539.1 L907.7,539.6 L902.2,539.7 L896.6,539.5 L891.1,538.8 L885.5,537.8 L879.8,536.4 L874.0,534.6 L868.1,532.6 L862.1,530.2 L856.0,527.6 L849.8,524.7 L843.4,521.6 L837.0,518.3 L830.5,514.8 L823.9,511.1 L817.2,507.3 L810.4,503.4 L803.7,499.4 L796.8,495.2 L790.0,490.9 L783.2,486.6 L776.3,482.2 L769.5,477.7 L762.7,473.2 L756.0,468.6 L749.3,463.9 L742.7,459.2 L736.1,454.5 M893.3,581.0 L888.0,581.5 L882.2,581.1 L875.9,579.7 L869.0,577.6 L861.5,574.8 L853.4,571.4 L844.9,567.6 L836.0,563.5 L826.9,559.2 L817.5,554.7 L807.9,550.0 L798.3,545.1 L788.5,540.2 L778.8,535.2 L769.0,530.2 L759.2,525.1 L749.5,519.9 L739.9,514.7 L730.3,509.5 L720.8,504.2 L711.4,499.0 L702.2,493.7 L693.1,488.3 L684.1,483.0 L675.3,477.7 L666.7,472.3 L658.3,466.9 L650.0,461.6 L641.9,456.2 L634.1,450.8 M942.5,575.8 L934.7,579.2 L927.5,581.9 L920.9,583.9 L914.9,585.0 L909.3,584.9 L904.1,583.9 L898.9,581.9 L893.6,579.1 L888.2,575.7 L882.7,571.8 L877.0,567.6 L871.1,563.2 L865.2,558.5 L859.2,553.7 L853.2,548.8 L847.1,543.8 L841.0,538.8 L834.9,533.6 L828.9,528.5 L822.8,523.3 L816.8,518.0 L810.8,512.7 L804.9,507.4 L799.1,502.1 L793.3,496.8 L787.6,491.4 L782.0,486.0 L776.4,480.7 L771.0,475.3 L765.7,469.9 L760.4,464.5 L755.3,459.1 L750.3,453.6 M876.7,581.0 L869.8,579.0 L862.3,576.2 L854.2,572.9 L845.6,569.2 L836.5,565.1 L827.2,560.8 L817.7,556.2 L807.9,551.5 L798.1,546.7 L788.2,541.8 L778.2,536.8 L768.2,531.7 L758.3,526.6 L748.4,521.4 L738.5,516.2 L728.7,511.0 L719.1,505.7 L709.5,500.4 L700.1,495.1 L690.8,489.8 L681.6,484.4 L672.6,479.1 L663.8,473.7 L655.2,468.4 L646.8,463.0 L638.5,457.6 L630.5,452.2 M740.0,538.3 L730.2,532.9 L720.6,527.5 L711.0,522.1 L701.6,516.6 L692.4,511.2 L683.3,505.7 L674.4,500.2 L665.7,494.8 L657.2,489.3 L648.9,483.8 L640.8,478.3 L632.9,472.8 L625.2,467.3 L617.8,461.8 L610.6,456.3 L603.7,450.8 M756.7,524.2 L749.8,518.8 L743.0,513.4 L736.3,507.9 L729.7,502.5 L723.3,497.0 L717.0,491.6 L710.9,486.1 L704.9,480.6 L699.1,475.2 L693.5,469.7 L688.0,464.2 L682.7,458.7 L677.6,453.2 M808.3,496.7 L806.6,491.5 L804.9,486.2 L803.3,481.0 L801.7,475.7 L800.3,470.4 L798.9,465.1 L797.5,459.8 L796.3,454.4 M710.0,480.0 L709.0,475.9 L708.0,471.7 L707.0,467.5 L706.0,463.2 L705.1,458.8 L704.2,454.4 M649.2,454.2 L641.3,451.8 M647.5,460.8 L640.2,455.3 M1216.9,481.3 L1217.8,478.4 L1218.9,475.4 L1220.1,472.2 L1221.5,469.0 M693.3,470.8 L684.9,467.2 L676.4,463.5 L668.0,459.7 L659.6,455.8 L651.1,451.8 M690.8,493.3 L681.2,489.7 L671.5,486.1 L661.7,482.3 L651.8,478.4 L641.9,474.4 L632.1,470.4 L622.2,466.2 L612.4,462.0 L602.6,457.8 L592.9,453.4 M718.3,503.3 L715.3,498.9 L712.4,494.5 L709.4,489.9 L706.5,485.3 L703.6,480.7 L700.8,475.9 L698.0,471.2 L695.3,466.4 L692.8,461.5 L690.3,456.6 L687.9,451.7 M1018.3,565.8 L1004.5,570.3 L991.2,574.4 L978.8,578.2 L967.4,581.5 L957.4,584.2 L948.9,585.9 L942.3,586.6 L937.4,586.2 L933.8,584.7 L931.3,582.3 L929.5,579.2 L928.1,575.5 L926.9,571.4 L926.0,567.0 L925.1,562.4 L924.3,557.6 L923.5,552.7 L922.7,547.7 L921.9,542.6 L921.2,537.5 L920.4,532.3 L919.7,527.1 L918.9,521.8 L918.1,516.5 L917.3,511.2 L916.5,505.9 L915.7,500.6 L914.9,495.2 L914.0,489.8 L913.2,484.4 L912.3,479.0 L911.5,473.6 L910.6,468.2 L909.7,462.8 L908.9,457.4 L908.0,451.9 M940.6,230.6 L939.7,235.3 L938.8,240.0 L937.9,244.7 L937.0,249.4 L936.0,254.1 L935.0,258.8 L934.0,263.5 L933.0,268.2 L932.0,272.9 L930.9,277.7 L929.8,282.4 L928.7,287.1 L927.6,291.8 L926.5,296.6 L925.3,301.3 L924.2,306.0 L923.0,310.8 L921.8,315.5 L920.6,320.2 L919.4,324.9 L918.2,329.7 L916.9,334.4 L915.7,339.1 L914.4,343.9 L913.2,348.6 L911.9,353.3 L910.6,358.0 L909.4,362.8 L908.1,367.5 L906.8,372.2 L905.5,376.9 L904.2,381.6 L902.9,386.3 L901.6,391.0 L900.3,395.7 L899.0,400.4 L897.7,405.1 L896.4,409.8 L895.1,414.5 L893.8,419.2 L892.6,423.9 L891.3,428.5 L890.0,433.2 L888.8,437.8 L887.5,442.5 L886.3,447.1 L885.0,451.7 L883.8,456.3 L882.6,460.9 L881.4,465.5 L880.2,470.1 L879.0,474.6 L877.8,479.2 L876.7,483.7 L875.5,488.2 L874.4,492.6 L873.3,497.1 L872.2,501.5 L871.0,505.9 L869.9,510.2 L868.8,514.5 L867.7,518.7 L866.6,522.9 L865.5,527.0 L864.4,531.0 L863.3,534.9 L862.1,538.7 M972.5,177.8 L973.1,182.6 L973.7,187.3 L974.3,192.1 L974.8,196.9 L975.3,201.7 L975.7,206.5 L976.0,211.3 L976.4,216.1 L976.6,220.9 L976.9,225.7 L977.0,230.5 L977.2,235.3 L977.2,240.1 L977.2,244.9 L977.2,249.7 L977.1,254.5 L977.0,259.3 L976.8,264.1 L976.6,269.0 L976.3,273.8 L976.0,278.6 L975.6,283.4 L975.2,288.2 L974.7,293.0 L974.2,297.9 L973.7,302.7 L973.0,307.5 L972.4,312.3 L971.7,317.1 L970.9,322.0 L970.1,326.8 L969.2,331.6 L968.4,336.4 L967.4,341.3 L966.4,346.1 L965.4,350.9 L964.3,355.7 L963.2,360.5 L962.1,365.3 L960.9,370.2 L959.7,375.0 L958.4,379.8 L957.1,384.6 L955.7,389.4 L954.4,394.2 L953.0,399.0 L951.5,403.9 L950.0,408.7 L948.5,413.5 L947.0,418.3 L945.4,423.1 L943.8,427.9 L942.2,432.7 L940.5,437.4 L938.9,442.2 L937.2,447.0 L935.4,451.8 L933.7,456.6 L931.9,461.3 L930.1,466.1 L928.3,470.9 L926.5,475.6 L924.7,480.4 L922.8,485.1 L921.0,489.8 L919.1,494.5 L917.2,499.2 L915.4,503.9 L913.5,508.6 L911.6,513.2 L909.7,517.9 L907.8,522.5 L905.9,527.1 L903.9,531.6 L902.0,536.1 M1037.8,194.4 L1037.2,198.4 L1036.5,202.3 L1035.8,206.4 L1035.1,210.4 L1034.3,214.5 L1033.5,218.6 L1032.6,222.7 L1031.6,226.8 L1030.6,231.0 L1029.5,235.2 L1028.4,239.4 L1027.2,243.6 L1026.0,247.8 L1024.6,252.1 L1023.3,256.3 L1021.8,260.6 L1020.4,264.8 L1018.8,269.1 L1017.2,273.4 L1015.5,277.7 L1013.8,282.0 L1012.0,286.3 L1010.1,290.6 L1008.2,294.9 L1006.3,299.3 L1004.3,303.6 L1002.2,307.9 L1000.1,312.3 L997.9,316.6 L995.6,320.9 L993.4,325.2 L991.0,329.6 L988.7,333.9 L986.2,338.2 L983.8,342.6 L981.2,346.9 L978.7,351.2 L976.1,355.5 L973.5,359.8 L970.8,364.1 L968.1,368.4 L965.3,372.7 L962.5,377.0 L959.7,381.2 L956.9,385.5 L954.0,389.8 L951.1,394.0 L948.2,398.2 L945.3,402.4 L942.3,406.6 L939.4,410.8 L936.4,414.9 L933.4,419.1 L930.3,423.2 L927.3,427.3 L924.3,431.4 L921.2,435.4 L918.2,439.4 L915.1,443.4 L912.0,447.3 L909.0,451.2 L905.9,455.1 L902.8,458.9 L899.7,462.7 L896.7,466.5 L893.6,470.1 L890.5,473.8 L887.5,477.3 L884.4,480.8 L881.3,484.2 L878.2,487.6 L875.2,490.8 L872.1,493.9 L868.9,497.0 L865.8,499.9 L862.7,502.8 L859.5,505.4 L856.3,508.0 L853.0,510.4 L849.7,512.6 L846.2,514.7 L842.7,516.6 L839.1,518.3 L835.4,519.8 L831.6,521.0 L827.6,522.1 L823.4,522.9 L819.0,523.5 L814.5,523.8 L809.7,523.9 L804.6,523.8 L799.4,523.4 L793.8,522.7 L788.0,521.9 L782.0,520.8 L775.7,519.4 L769.1,517.9 L762.3,516.2 L755.3,514.2 L748.1,512.1 L740.6,509.8 L732.9,507.4 L725.1,504.8 L717.1,502.1 L708.9,499.2 L700.6,496.3 L692.3,493.2 L683.8,490.0 L675.2,486.8 L666.6,483.4 L658.0,480.0 L649.3,476.5 L640.6,472.9 M1061.4,180.6 L1061.6,184.5 L1061.7,188.5 L1061.7,192.5 L1061.8,196.5 L1061.7,200.6 L1061.6,204.7 L1061.5,208.8 L1061.3,213.0 L1061.0,217.1 L1060.6,221.3 L1060.2,225.5 L1059.7,229.8 L1059.2,234.0 L1058.5,238.3 L1057.8,242.5 L1057.0,246.8 L1056.1,251.1 L1055.2,255.4 L1054.1,259.8 L1053.0,264.1 L1051.8,268.4 L1050.6,272.8 L1049.2,277.1 L1047.8,281.5 L1046.3,285.8 L1044.7,290.2 L1043.0,294.6 L1041.3,299.0 L1039.4,303.3 L1037.6,307.7 L1035.6,312.1 L1033.5,316.5 L1031.4,320.9 L1029.2,325.3 L1027.0,329.6 L1024.7,334.0 L1022.3,338.4 L1019.8,342.8 L1017.3,347.2 L1014.7,351.5 L1012.0,355.9 L1009.3,360.3 L1006.6,364.6 L1003.7,369.0 L1000.9,373.3 L997.9,377.7 L994.9,382.0 L991.9,386.3 L988.8,390.6 L985.7,394.9 L982.6,399.2 L979.3,403.5 L976.1,407.7 L972.8,412.0 L969.5,416.2 L966.2,420.4 L962.8,424.6 L959.4,428.7 L956.0,432.9 L952.6,437.0 L949.1,441.1 L945.6,445.2 L942.2,449.2 L938.7,453.2 L935.1,457.1 L931.6,461.0 L928.1,464.9 L924.6,468.7 L921.0,472.5 L917.5,476.2 L914.0,479.9 L910.4,483.5 L906.9,487.0 L903.3,490.4 L899.8,493.8 L896.3,497.1 L892.7,500.2 L889.2,503.3 L885.6,506.2 L882.1,509.0 L878.5,511.7 L874.9,514.2 L871.2,516.6 L867.5,518.7 L863.8,520.7 L860.0,522.5 L856.0,524.1 L852.0,525.4 L847.9,526.5 L843.6,527.4 L839.2,528.0 L834.6,528.4 L829.8,528.5 L824.8,528.3 L819.5,527.9 L814.1,527.2 L808.4,526.3 L802.4,525.1 L796.3,523.8 L789.9,522.1 L783.2,520.3 L776.4,518.3 L769.3,516.1 L762.1,513.7 L754.7,511.1 L747.1,508.4 L739.3,505.6 L731.4,502.6 L723.5,499.6 L715.4,496.4 L707.2,493.1 L699.0,489.7 L690.7,486.2 M1117.0,283.0 L1116.2,287.5 L1115.3,292.1 L1114.3,296.6 L1113.1,301.2 L1111.8,305.8 L1110.4,310.3 L1108.9,314.9 L1107.2,319.4 L1105.5,324.0 L1103.6,328.6 L1101.5,333.1 L1099.4,337.7 L1097.1,342.2 L1094.8,346.8 L1092.3,351.3 L1089.7,355.9 L1086.9,360.4 L1084.1,365.0 L1081.2,369.5 L1078.2,374.0 L1075.0,378.6 L1071.8,383.1 L1068.5,387.6 L1065.0,392.1 L1061.5,396.6 L1057.9,401.1 L1054.2,405.6 L1050.4,410.0 L1046.5,414.5 L1042.6,419.0 L1038.6,423.4 L1034.5,427.8 L1030.4,432.2 L1026.1,436.6 L1021.9,441.0 L1017.5,445.3 L1013.1,449.7 L1008.7,454.0 L1004.2,458.3 L999.7,462.5 L995.2,466.8 L990.6,471.0 L986.0,475.1 L981.3,479.2 L976.7,483.3 L972.0,487.3 L967.3,491.3 L962.7,495.2 L958.0,499.1 L953.3,502.9 L948.7,506.6 L944.0,510.2 L939.4,513.7 L934.8,517.2 L930.3,520.5 L925.7,523.6 L921.2,526.6 L916.7,529.5 L912.3,532.2 L907.8,534.7 L903.4,536.9 M878.0,195.6 L876.1,200.3 L874.2,205.0 L872.4,209.6 L870.5,214.3 L868.7,219.0 L866.9,223.8 L865.2,228.5 L863.4,233.2 L861.7,237.9 L860.0,242.6 L858.3,247.4 L856.6,252.1 L855.0,256.8 L853.4,261.6 L851.9,266.3 L850.3,271.0 L848.9,275.8 L847.4,280.5 L846.0,285.3 L844.6,290.0 L843.2,294.8 L841.9,299.5 L840.6,304.3 L839.4,309.0 L838.2,313.8 L837.1,318.5 L836.0,323.3 L834.9,328.0 L833.9,332.8 L832.9,337.6 L832.0,342.3 L831.1,347.1 L830.2,351.8 L829.4,356.6 L828.7,361.3 L828.0,366.0 L827.3,370.8 L826.7,375.5 L826.2,380.3 L825.7,385.0 L825.2,389.7 L824.8,394.5 L824.4,399.2 L824.1,403.9 L823.9,408.6 L823.6,413.4 L823.5,418.1 L823.4,422.8 L823.3,427.5 L823.3,432.2 L823.3,436.9 L823.4,441.5 L823.5,446.2 L823.7,450.9 L823.9,455.5 L824.1,460.2 L824.4,464.8 L824.8,469.4 L825.2,474.0 L825.6,478.6 L826.1,483.2 L826.6,487.8 L827.1,492.3 L827.7,496.8 L828.3,501.3 L828.9,505.7 L829.5,510.1 L830.2,514.5 L830.8,518.9 L831.5,523.1 L832.2,527.4 L832.8,531.5 L833.4,535.6 M786.7,164.4 L780.8,167.8 L775.0,171.2 L769.1,174.7 L763.2,178.2 L757.4,181.8 L751.5,185.5 L745.7,189.2 L739.9,193.0 L734.2,196.8 L728.5,200.6 L722.8,204.5 L717.2,208.4 L711.7,212.3 L706.2,216.3 L700.8,220.3 L695.5,224.3 L690.2,228.3 L685.1,232.4 L680.0,236.5 L675.1,240.6 L670.2,244.7 L665.4,248.8 L660.8,253.0 L656.2,257.1 L651.8,261.3 L647.5,265.5 L643.3,269.7 L639.3,273.9 L635.3,278.1 L631.6,282.3 L627.9,286.5 L624.4,290.7 L621.0,295.0 L617.8,299.2 L614.7,303.5 L611.8,307.7 L609.0,312.0 L606.4,316.2 L603.9,320.5 L601.6,324.7 L599.4,329.0 L597.4,333.2 L595.6,337.5 L593.9,341.7 L592.4,346.0 L591.0,350.2 L589.8,354.4 L588.7,358.6 L587.8,362.9 L587.1,367.1 L586.5,371.3 L586.1,375.5 L585.8,379.7 L585.7,383.8 L585.7,388.0 L585.9,392.1 L586.2,396.3 L586.7,400.4 L587.3,404.5 L588.1,408.6 L588.9,412.6 L589.9,416.7 L591.1,420.7 L592.3,424.7 L593.7,428.6 L595.1,432.6 L596.7,436.5 L598.4,440.3 L600.1,444.2 L601.9,448.0 L603.8,451.7 L605.8,455.4 L607.8,459.1 L609.8,462.7 L611.9,466.2 L613.9,469.7 L616.0,473.2 L618.0,476.5 L620.0,479.8 L621.9,483.0 L623.8,486.1 L625.6,489.1 L627.2,492.0 L628.7,494.8 L630.0,497.5 L631.1,500.0 L631.9,502.4 L632.5,504.7 L632.8,506.8 L632.8,508.8 L632.4,510.5 L631.5,512.1 L630.3,513.5 L628.5,514.7 L626.3,515.7 L623.4,516.5 L620.1,517.1 L616.1,517.4 M1187.3,517.5 L1182.7,517.4 L1178.7,517.0 L1175.3,516.5 L1172.5,515.7 L1170.2,514.7 L1168.4,513.5 L1167.1,512.1 L1166.2,510.5 L1165.7,508.7 L1165.6,506.8 L1165.8,504.6 L1166.3,502.4 L1167.1,499.9 L1168.1,497.4 M797.8,168.9 L792.2,172.1 L786.6,175.4 L781.0,178.8 L775.4,182.2 L769.8,185.7 L764.2,189.2 L758.7,192.8 L753.1,196.4 L747.6,200.1 L742.2,203.8 L736.7,207.6 L731.3,211.3 L726.0,215.2 L720.7,219.0 L715.5,222.9 L710.3,226.8 L705.3,230.7 L700.3,234.7 L695.3,238.7 L690.5,242.7 L685.7,246.7 L681.1,250.7 L676.5,254.8 L672.0,258.9 L667.7,262.9 L663.4,267.0 L659.3,271.1 L655.3,275.2 L651.3,279.4 L647.6,283.5 L643.9,287.6 L640.3,291.8 L636.9,295.9 L633.6,300.1 L630.5,304.2 L627.5,308.4 L624.6,312.5 L621.9,316.7 L619.3,320.9 L616.8,325.0 L614.5,329.2 L612.3,333.4 L610.3,337.5 L608.4,341.7 L606.6,345.8 L605.0,350.0 L603.6,354.1 L602.3,358.2 L601.1,362.4 L600.1,366.5 L599.2,370.6 L598.5,374.7 L597.9,378.8 L597.4,382.9 L597.1,386.9 L596.9,391.0 L596.9,395.0 L597.0,399.0 L597.2,403.0 L597.5,407.0 L598.0,410.9 L598.5,414.9 L599.2,418.8 L600.0,422.6 L600.9,426.5 L601.9,430.3 L602.9,434.1 L604.1,437.8 L605.3,441.5 L606.6,445.2 L607.9,448.8 L609.3,452.4 L610.8,455.9 L612.2,459.4 L613.7,462.8 L615.1,466.1 L616.6,469.4 L618.0,472.6 L619.4,475.7 L620.7,478.8 L621.9,481.7 L623.1,484.6 L624.1,487.3 L624.9,489.9 L625.6,492.5 L626.1,494.8 L626.3,497.1 L626.3,499.2 L626.0,501.2 L625.4,503.0 L624.5,504.6 L623.2,506.1 L621.4,507.4 L619.3,508.4 L616.7,509.3 L613.6,510.0 L610.0,510.5 L605.8,510.8 L601.2,510.9 L596.0,510.8 M1204.1,510.4 L1200.7,509.9 L1197.8,509.2 L1195.3,508.2 L1193.4,507.1 L1191.9,505.8 L1190.8,504.3 L1190.1,502.6 L1189.7,500.7 L1189.7,498.7 L1189.9,496.6 L1190.4,494.3 L1191.2,491.9 M826.7,168.9 L825.2,173.8 L823.8,178.6 L822.4,183.5 L821.0,188.3 L819.8,193.2 L818.5,198.0 L817.4,202.9 L816.2,207.7 L815.2,212.6 L814.2,217.5 L813.3,222.3 L812.4,227.2 L811.6,232.1 L810.8,236.9 L810.1,241.8 L809.5,246.6 L808.9,251.5 L808.4,256.4 L808.0,261.2 L807.6,266.1 L807.3,271.0 L807.0,275.8 L806.9,280.7 L806.7,285.6 L806.7,290.4 L806.7,295.3 L806.8,300.2 L806.9,305.0 L807.1,309.9 L807.4,314.8 L807.7,319.6 L808.1,324.5 L808.6,329.4 L809.1,334.2 L809.7,339.1 L810.4,344.0 L811.1,348.8 L811.9,353.7 L812.7,358.6 L813.6,363.4 L814.6,368.3 L815.6,373.2 L816.7,378.0 L817.8,382.9 L819.0,387.8 L820.2,392.6 L821.5,397.5 L822.9,402.4 L824.3,407.2 L825.8,412.1 L827.3,417.0 L828.9,421.8 L830.5,426.7 L832.2,431.5 L833.9,436.4 L835.6,441.3 L837.4,446.1 L839.3,451.0 L841.2,455.8 L843.1,460.7 L845.1,465.5 L847.1,470.4 L849.1,475.2 L851.2,480.1 L853.3,484.9 L855.5,489.8 L857.7,494.6 L859.9,499.5 L862.1,504.3 L864.4,509.1 L866.6,513.9 L868.9,518.8 L871.3,523.6 L873.6,528.4 L876.0,533.2 L878.3,538.0 M1142.2,373.3 L1139.3,378.1 L1136.1,382.8 L1132.9,387.6 L1129.5,392.3 L1125.9,397.1 L1122.2,401.8 L1118.4,406.6 L1114.4,411.3 L1110.3,416.0 L1106.1,420.8 L1101.7,425.5 L1097.2,430.2 L1092.6,434.9 L1087.9,439.6 L1083.1,444.3 L1078.1,449.0 L1073.1,453.7 L1067.9,458.4 L1062.6,463.1 L1057.3,467.7 L1051.9,472.4 L1046.3,477.0 L1040.8,481.6 L1035.1,486.2 L1029.4,490.8 L1023.6,495.4 L1017.8,499.9 L1011.9,504.4 L1005.9,508.9 L1000.0,513.4 L994.0,517.8 L988.0,522.2 L982.0,526.5 L976.1,530.8 L970.1,535.0 L964.2,539.1 M1120.0,442.2 L1116.5,447.0 L1112.8,451.8 L1109.0,456.6 L1105.1,461.4 L1101.1,466.2 L1096.9,471.0 L1092.6,475.8 L1088.2,480.5 L1083.6,485.3 L1079.0,490.0 L1074.2,494.8 L1069.4,499.5 L1064.4,504.3 L1059.4,509.0 L1054.3,513.7 L1049.1,518.4 L1043.8,523.0 L1038.5,527.7 L1033.2,532.3 L1027.8,536.9 M1246.7,466.7 L1242.3,470.6 L1237.9,474.4 L1233.5,478.2 L1229.0,482.0 L1224.6,485.6 L1220.1,489.2 L1215.8,492.8 L1211.5,496.2 L1207.3,499.6 L1203.2,502.8 L1199.3,505.9 L1195.6,509.0 L1192.2,511.9 L1189.1,514.6 L1186.3,517.2 L1183.9,519.7 M630.4,521.9 L640.5,524.0 L650.0,525.8 L658.9,527.5 L667.2,528.9 L675.0,530.0 L682.1,530.9 L688.5,531.6 L694.3,532.0 L699.4,532.1 L703.9,531.9 L707.7,531.4 L711.0,530.7 L713.7,529.8 L715.9,528.5 L717.6,527.1 L718.8,525.4 L719.7,523.4 L720.2,521.3 L720.4,519.0 L720.3,516.5 L719.9,513.9 L719.4,511.1 L718.7,508.2 L717.8,505.1 L716.8,501.9 L715.7,498.7 L714.5,495.3 L713.3,491.8 L712.0,488.3 L710.7,484.7 L709.4,481.0 L708.1,477.2 L706.8,473.4 L705.5,469.6 L704.3,465.7 L703.1,461.7 L701.9,457.7 L700.8,453.7 L699.8,449.6 L698.8,445.5 L698.0,441.4 L697.1,437.2 L696.4,433.1 L695.8,428.9 L695.2,424.6 L694.8,420.4 L694.4,416.1 L694.1,411.8 L694.0,407.6 L693.9,403.2 L693.9,398.9 L694.1,394.6 L694.3,390.2 L694.7,385.9 L695.2,381.5 L695.8,377.1 L696.5,372.8 L697.3,368.4 L698.2,364.0 L699.2,359.6 L700.3,355.2 L701.6,350.8 L703.0,346.3 L704.4,341.9 L706.0,337.5 L707.7,333.1 L709.5,328.7 L711.4,324.2 L713.5,319.8 L715.6,315.4 L717.8,311.0 L720.2,306.5 L722.6,302.1 L725.1,297.7 L727.8,293.3 L730.5,288.9 L733.3,284.5 L736.3,280.1 L739.3,275.7 L742.4,271.3 L745.6,266.9 L748.8,262.5 L752.2,258.1 L755.6,253.8 L759.1,249.4 L762.7,245.1 L766.4,240.7 L770.1,236.4 L773.9,232.1 L777.8,227.8 L781.7,223.5 L785.7,219.3 L789.7,215.0 L793.8,210.8 L797.9,206.6 L802.1,202.5" fill="none" stroke="#666666" stroke-opacity="0.5" stroke-width="1.389" stroke-dasharray="1.389 2.292"/>
<path d="M873.3,515.5 L874.7,514.6 L876.1,513.7 L877.5,512.7 L878.9,511.7 L880.3,510.7 L881.7,509.7 M936.3,533.3 L938.1,532.7 L939.8,532.0 L941.6,531.3 L943.4,530.6 L945.2,529.9 L947.1,529.1 L948.9,528.3 L950.7,527.5 L952.6,526.7 L954.4,525.8 L956.3,525.0 L958.2,524.1 L960.1,523.2 L962.0,522.2 L963.9,521.3 L965.8,520.3 L967.7,519.3 L969.7,518.3 L971.6,517.3 L973.6,516.3 L975.5,515.3 L977.5,514.2 M893.3,581.0 L894.8,580.7 L896.3,580.3 L897.8,579.8 L899.3,579.2 L900.8,578.6 L902.3,577.9 L903.8,577.2 L905.2,576.4 L906.7,575.5 L908.2,574.6 L909.7,573.7 L911.2,572.7 L912.7,571.6 L914.3,570.6 L915.8,569.4 L917.3,568.3 L918.9,567.1 L920.5,565.9 L922.0,564.7 L923.6,563.5 L925.2,562.2 L926.8,560.9 L928.4,559.6 L930.0,558.3 M942.5,575.8 L945.2,574.6 L947.9,573.3 L950.6,572.0 L953.5,570.7 L956.3,569.3 L959.2,567.9 L962.1,566.5 L965.0,565.0 M876.7,581.0 L878.7,581.5 L880.7,581.8 L882.6,582.1 L884.4,582.3 L886.2,582.4 L887.9,582.4 L889.6,582.3 L891.2,582.1 L892.8,581.8 L894.4,581.5 L896.0,581.0 M766.7,555.0 L770.9,556.3 L775.0,557.6 L779.0,558.9 L783.0,560.1 L786.9,561.3 L790.8,562.5 M790.0,565.0 L793.0,566.6 L796.0,568.1 L799.0,569.7 L802.0,571.2 L804.9,572.8 L807.9,574.3 L810.8,575.8 L813.7,577.3 L816.6,578.8 L819.4,580.3 L822.2,581.7 L824.9,583.1 L827.6,584.5 L830.2,585.9 L832.8,587.2 L835.2,588.5 L837.5,589.8 L839.7,591.0 L841.7,592.1 L843.5,593.2 L845.0,594.2 M756.7,524.2 L758.9,525.9 L761.0,527.5 L763.2,529.2 L765.4,530.9 L767.6,532.5 L769.8,534.2 L772.0,535.8 L774.2,537.5 M808.3,496.7 L808.8,498.3 L809.4,499.9 L809.9,501.4 L810.5,503.0 L811.0,504.6 L811.6,506.1 L812.2,507.7 L812.7,509.2 L813.3,510.8 M710.0,480.0 L710.3,481.3 L710.6,482.6 L711.0,483.8 L711.3,485.1 L711.6,486.3 L711.9,487.6 L712.2,488.8 L712.5,490.0 M649.2,454.2 L651.7,455.0 L654.3,455.7 L656.8,456.5 L659.3,457.2 L661.8,457.9 L664.3,458.6 L666.7,459.3 L669.2,460.0 M647.5,460.8 L649.9,462.6 L652.4,464.4 L654.9,466.3 L657.4,468.1 L659.9,469.9 L662.5,471.7 M534.2,467.5 L539.2,469.6 L544.2,471.7 M575.0,502.1 L576.9,502.2 L578.8,502.3 L580.7,502.4 L582.5,502.5 L584.2,502.5 M693.3,470.8 L695.8,471.9 L698.3,472.9 L700.8,474.0 L703.3,475.0 M690.8,493.3 L693.7,494.4 L696.7,495.4 L699.6,496.5 L702.5,497.5 M718.3,503.3 L719.4,505.0 L720.6,506.6 L721.7,508.3 M590.0,465.8 L592.5,467.9 L595.0,470.0 M650.8,433.3 L652.9,435.0 L655.1,436.7 L657.3,438.3 L659.5,440.0 L661.7,441.7 M1018.3,565.8 L1022.9,564.3 L1027.5,562.8" fill="none" stroke="#666666" stroke-width="1.389"/>
<path d="M515.8,462.0 L515.9,460.5 L515.9,459.0 L515.8,457.5 L515.7,455.9 L515.5,454.3 L515.4,452.6 L515.2,450.9 L514.9,449.1 L514.6,447.4 L514.4,445.6 L514.1,443.7 L513.8,441.9 L513.4,440.0 L513.1,438.1 L512.8,436.1 L512.5,434.1 L512.2,432.1 L511.9,430.1 L511.6,428.1 L511.3,426.0 L511.1,423.9 L510.9,421.8 L510.7,419.6 L510.5,417.5 L510.4,415.3 L510.3,413.1 L510.2,410.9 L510.1,408.7 L510.2,406.5 L510.2,404.2 L510.3,401.9 L510.4,399.7 L510.6,397.4 L510.8,395.1 L511.1,392.7 L511.4,390.4 L511.8,388.1 L512.2,385.7 L512.7,383.4 L513.3,381.0 L513.9,378.6 L514.5,376.2 L515.3,373.8 L516.0,371.4 L516.9,369.0 L517.8,366.6 L518.7,364.2 L519.7,361.7 L520.8,359.3 L522.0,356.9 L523.2,354.4 L524.5,352.0 L525.8,349.5 L527.2,347.0 L528.7,344.6 L530.2,342.1 L531.8,339.6 L533.4,337.2 L535.2,334.7 L537.0,332.2 L538.8,329.7 L540.7,327.3 L542.7,324.8 L544.8,322.3 L546.9,319.8 L549.0,317.3 L551.3,314.9 L553.6,312.4 L555.9,309.9 L558.3,307.4 L560.8,304.9 L563.3,302.5 L565.9,300.0 L568.6,297.5 L571.3,295.1 L574.1,292.6 L576.9,290.1 L579.8,287.7 L582.7,285.2 L585.7,282.8 L588.7,280.3 L591.8,277.9 L595.0,275.5 L598.2,273.1 L601.4,270.6 L604.7,268.2" fill="none" stroke="#ffb20d" stroke-width="1.389" stroke-dasharray="1.389 2.292"/>
<path d="M618.1,518.3 L619.4,517.6 L620.4,516.8 L621.2,515.9 L621.8,514.9 L622.1,513.8 L622.2,512.7 L622.2,511.4 L621.9,510.1 L621.5,508.7 L620.9,507.2 L620.2,505.7 L619.3,504.1 L618.3,502.4 L617.2,500.6 L616.0,498.8 L614.7,497.0 L613.3,495.1 L611.8,493.1 L610.3,491.1 L608.7,489.1 L607.1,487.0 L605.4,484.8 L603.6,482.6 L601.9,480.4 L600.1,478.2 L598.3,475.9 L596.5,473.6 L594.7,471.2 L592.9,468.8 L591.1,466.4 L589.3,464.0 L587.5,461.5 L585.7,459.1 L583.9,456.5 L582.2,454.0 L580.5,451.5 L578.9,448.9 L577.2,446.3 L575.7,443.7 L574.1,441.1 L572.6,438.5 L571.1,435.8 L569.7,433.2 L568.4,430.5 L567.1,427.8 L565.8,425.1 L564.6,422.4 L563.5,419.7 L562.4,417.0 L561.4,414.2 L560.5,411.5 L559.6,408.7 L558.8,405.9 L558.1,403.2 L557.4,400.4 L556.8,397.6 L556.3,394.8 L555.8,392.0 L555.5,389.2 L555.1,386.4 L554.9,383.5 L554.8,380.7 L554.7,377.9 L554.7,375.0 L554.8,372.2 L554.9,369.4 L555.2,366.5 L555.5,363.7 L555.9,360.8 L556.3,357.9 L556.9,355.1 L557.5,352.2 L558.3,349.4 L559.1,346.5 L559.9,343.6 L560.9,340.7 L561.9,337.9 L563.1,335.0 L564.3,332.1 L565.5,329.2 L566.9,326.4 L568.3,323.5 L569.9,320.6 L571.5,317.7 L573.1,314.9 L574.9,312.0 L576.7,309.1 L578.6,306.2 L580.6,303.3 L582.7,300.5 L584.8,297.6 L587.0,294.7 L589.3,291.9 L591.7,289.0 L594.1,286.1 L596.6,283.3 L599.2,280.4 L601.9,277.6 L604.6,274.7 L607.4,271.9" fill="none" stroke="#ffb20d" stroke-width="1.389" stroke-dasharray="1.389 2.292"/>
<path d="M686.3,521.7 L683.0,519.2 L679.7,516.7 L676.3,514.1 L672.9,511.5 L669.5,508.8 L666.1,506.1 L662.7,503.4 L659.3,500.7 L655.8,497.9 L652.4,495.1 L649.0,492.3 L645.7,489.5 L642.3,486.7 L639.0,483.8 L635.8,481.0 L632.5,478.1 L629.3,475.2 L626.2,472.3 L623.1,469.3 L620.1,466.4 L617.1,463.4 L614.1,460.5 L611.3,457.5 L608.4,454.6 L605.7,451.6 L603.0,448.6 L600.4,445.6 L597.8,442.6 L595.4,439.6 L593.0,436.5 L590.6,433.5 L588.4,430.5 L586.2,427.5 L584.1,424.4 L582.1,421.4 L580.2,418.3 L578.3,415.3 L576.5,412.2 L574.8,409.2 L573.2,406.1 L571.7,403.0 L570.3,400.0 L568.9,396.9 L567.7,393.8 L566.5,390.7 L565.4,387.7 L564.5,384.6 L563.6,381.5 L562.8,378.4 L562.0,375.3 L561.4,372.2 L560.9,369.1 L560.5,366.0 L560.1,362.9 L559.9,359.9 L559.7,356.8 L559.7,353.7 L559.7,350.6 L559.8,347.5 L560.1,344.4 L560.4,341.3 L560.8,338.2 L561.3,335.0 L561.9,331.9 L562.6,328.8 L563.4,325.7 L564.3,322.6 L565.2,319.5 L566.3,316.4 L567.5,313.3 L568.7,310.2 L570.1,307.1 L571.5,304.0 L573.1,300.9 L574.7,297.8 L576.4,294.7 L578.2,291.6 L580.1,288.5 L582.1,285.4 L584.1,282.3 L586.3,279.2 L588.5,276.1 L590.9,273.0 L593.3,269.9 L595.8,266.8" fill="none" stroke="#ffb20d" stroke-width="1.389" stroke-dasharray="1.389 2.292"/>
<path d="M724.2,506.7 L720.0,503.5 L715.8,500.2 L711.7,497.0 L707.6,493.7 L703.6,490.5 L699.7,487.3 L695.8,484.0 L691.9,480.8 L688.2,477.5 L684.5,474.3 L680.8,471.0 L677.3,467.8 L673.8,464.5 L670.3,461.3 L666.9,458.0 L663.7,454.8 L660.4,451.5 L657.3,448.2 L654.2,445.0 L651.2,441.7 L648.3,438.5 L645.4,435.2 L642.6,432.0 L639.9,428.7 L637.3,425.4 L634.8,422.2 L632.3,418.9 L630.0,415.7 L627.7,412.4 L625.5,409.1 L623.4,405.9 L621.3,402.6 L619.4,399.3 L617.5,396.1 L615.7,392.8 L614.1,389.6 L612.5,386.3 L610.9,383.0 L609.5,379.8 L608.2,376.5 L606.9,373.2 L605.8,370.0 L604.7,366.7 L603.8,363.4 L602.9,360.2 L602.1,356.9 L601.4,353.6 L600.8,350.4 L600.3,347.1 L599.9,343.9 L599.5,340.6 L599.3,337.3 L599.2,334.1 L599.1,330.8 L599.2,327.5 L599.3,324.3 L599.5,321.0 L599.9,317.7 L600.3,314.5 L600.8,311.2 L601.4,307.9 L602.1,304.7 L602.9,301.4 L603.7,298.1 L604.7,294.9 L605.8,291.6 L606.9,288.3 L608.2,285.1 L609.5,281.8 L610.9,278.5 L612.4,275.3 L614.0,272.0" fill="none" stroke="#ffb20d" stroke-width="1.389" stroke-dasharray="1.389 2.292"/>
<path d="M797.0,552.2 L792.0,548.9 L787.0,545.7 L782.0,542.4 L777.1,539.2 L772.2,535.9 L767.3,532.7 L762.5,529.4 L757.7,526.1 L753.0,522.9 L748.3,519.6 L743.6,516.4 L739.0,513.1 L734.5,509.8 L730.0,506.6 L725.6,503.3 L721.2,500.0 L716.8,496.8 L712.6,493.5 L708.3,490.2 L704.2,487.0 L700.1,483.7 L696.0,480.5 L692.1,477.2 L688.1,473.9 L684.3,470.7 L680.5,467.4 L676.8,464.1 L673.2,460.9 L669.6,457.6 L666.1,454.3 L662.7,451.1 L659.3,447.8 L656.0,444.5 L652.8,441.3 L649.7,438.0 L646.6,434.7 L643.6,431.5 L640.8,428.2 L637.9,424.9 L635.2,421.7 L632.6,418.4 L630.0,415.1 L627.5,411.9 L625.1,408.6 L622.8,405.3 L620.5,402.1 L618.4,398.8 L616.3,395.5 L614.4,392.2 L612.5,389.0 L610.7,385.7 L609.0,382.4 L607.4,379.2 L605.9,375.9 L604.4,372.6 L603.1,369.4 L601.8,366.1 L600.7,362.8 L599.6,359.6 L598.6,356.3 L597.8,353.0 L597.0,349.8 L596.3,346.5 L595.7,343.2 L595.2,340.0 L594.8,336.7 L594.5,333.4 L594.2,330.2 L594.1,326.9 L594.1,323.6 L594.1,320.4 L594.3,317.1 L594.6,313.8 L594.9,310.6 L595.3,307.3 L595.9,304.0 L596.5,300.7 L597.2,297.5 L598.1,294.2 L599.0,290.9 L600.0,287.7 L601.1,284.4 L602.3,281.1 L603.5,277.9 L604.9,274.6 L606.4,271.3" fill="none" stroke="#ffb20d" stroke-width="1.389" stroke-dasharray="1.389 2.292"/>
<path d="M872.5,551.7 L868.9,549.8 L865.3,547.8 L861.6,545.7 L857.8,543.5 L854.1,541.2 L850.3,538.9 L846.4,536.5 L842.5,534.0 L838.6,531.5 L834.7,528.9 L830.7,526.3 L826.8,523.7 L822.8,521.0 L818.8,518.3 L814.8,515.5 L810.8,512.7 L806.8,509.9 L802.8,507.1 L798.8,504.2 L794.8,501.3 L790.8,498.4 L786.8,495.5 L782.9,492.6 L779.0,489.6 L775.0,486.7 L771.1,483.7 L767.3,480.7 L763.4,477.7 L759.6,474.7 L755.8,471.7 L752.0,468.7 L748.3,465.6 L744.6,462.6 L741.0,459.5 L737.3,456.5 L733.8,453.4 L730.2,450.3 L726.7,447.2 L723.3,444.2 L719.9,441.1 L716.5,438.0 L713.2,434.9 L709.9,431.8 L706.7,428.7 L703.5,425.5 L700.4,422.4 L697.4,419.3 L694.4,416.2 L691.4,413.1 L688.5,409.9 L685.7,406.8 L682.9,403.7 L680.2,400.5 L677.6,397.4 L675.0,394.3 L672.4,391.1 L670.0,388.0 L667.6,384.8 L665.3,381.7 L663.0,378.5 L660.8,375.4 L658.7,372.2 L656.6,369.1 L654.6,365.9 L652.7,362.8 L650.9,359.6 L649.1,356.4 L647.4,353.3 L645.8,350.1 L644.2,347.0 L642.7,343.8 L641.3,340.6 L640.0,337.5 L638.8,334.3 L637.6,331.2 L636.5,328.0 L635.4,324.8 L634.5,321.7 L633.6,318.5 L632.8,315.3 L632.1,312.2 L631.5,309.0 L630.9,305.8 L630.4,302.7 L630.0,299.5 L629.7,296.4 L629.4,293.2 L629.3,290.0 L629.2,286.9 L629.1,283.7 L629.2,280.6 L629.3,277.4 L629.6,274.3 L629.9,271.1 L630.2,267.9 L630.7,264.8" fill="none" stroke="#ffb20d" stroke-width="1.389" stroke-dasharray="1.389 2.292"/>
<path d="M897.4,582.1 L894.1,581.5 L890.7,580.7 L887.2,579.5 L883.6,578.1 L879.9,576.4 L876.0,574.6 L872.1,572.6 L868.0,570.4 L863.8,568.1 L859.6,565.7 L855.3,563.1 L850.9,560.6 L846.5,557.9 L842.0,555.2 L837.5,552.4 L832.9,549.6 L828.4,546.8 L823.8,543.9 L819.2,541.0 L814.6,538.0 L810.0,535.0 L805.3,532.1 L800.7,529.0 L796.1,526.0 L791.5,523.0 L787.0,519.9 L782.4,516.9 L777.9,513.8 L773.3,510.7 L768.8,507.6 L764.4,504.5 L759.9,501.4 L755.5,498.3 L751.2,495.2 L746.8,492.0 L742.5,488.9 L738.3,485.7 L734.0,482.6 L729.9,479.4 L725.7,476.3 L721.7,473.1 L717.6,470.0 L713.6,466.8 L709.7,463.6 L705.8,460.5 L702.0,457.3 L698.2,454.1 L694.5,450.9 L690.9,447.7 L687.3,444.6 L683.7,441.4 L680.3,438.2 L676.8,435.0 L673.5,431.8 L670.2,428.6 L667.0,425.4 L663.9,422.2 L660.8,419.0 L657.8,415.8 L654.8,412.6 L652.0,409.4 L649.2,406.2 L646.5,403.0 L643.8,399.8 L641.3,396.6 L638.8,393.4 L636.4,390.2 L634.0,387.0 L631.8,383.8 L629.6,380.6 L627.5,377.4 L625.5,374.2 L623.6,371.0 L621.7,367.8 L619.9,364.5 L618.3,361.3 L616.7,358.1 L615.1,354.9 L613.7,351.7 L612.4,348.5 L611.1,345.3 L609.9,342.1 L608.8,338.9 L607.8,335.6 L606.9,332.4 L606.1,329.2 L605.4,326.0 L604.7,322.8 L604.2,319.6 L603.7,316.4 L603.3,313.2 L603.0,309.9 L602.8,306.7 L602.7,303.5 L602.7,300.3 L602.7,297.1 L602.9,293.9 L603.1,290.7 L603.4,287.5 L603.9,284.2 L604.4,281.0 L605.0,277.8 L605.6,274.6 L606.4,271.4" fill="none" stroke="#ffb20d" stroke-width="1.389" stroke-dasharray="1.389 2.292"/>
<path d="M1037.5,555.8 L1036.1,557.6 L1035.1,559.2 L1034.4,560.7 L1034.0,562.1 L1034.1,563.2 L1034.7,564.2 L1035.8,565.0 L1037.5,565.5 L1039.7,565.9 L1042.6,566.0 L1046.1,566.0 M754.2,565.6 L755.8,565.1 L756.9,564.4 L757.3,563.5 L757.3,562.4 L756.8,561.1 L755.8,559.6 L754.4,558.0 L752.7,556.2 L750.7,554.4 L748.4,552.4 L745.9,550.3 L743.2,548.1 L740.3,545.8 L737.2,543.5 L734.1,541.1 L730.8,538.6 L727.4,536.1 L724.0,533.5 L720.5,530.9 L716.9,528.2 L713.3,525.5 L709.7,522.7 L706.0,520.0 L702.4,517.2 L698.7,514.3 L695.1,511.5 L691.4,508.6 L687.8,505.7 L684.2,502.8 L680.6,499.9 L677.0,496.9 L673.5,494.0 L670.0,491.0 L666.5,488.0 L663.1,485.0 L659.8,482.0 L656.4,479.0 L653.2,475.9 L650.0,472.9 L646.8,469.9 L643.7,466.8 L640.6,463.7 L637.7,460.7 L634.7,457.6 L631.9,454.5 L629.1,451.4 L626.4,448.3 L623.7,445.3 L621.2,442.2 L618.6,439.0 L616.2,435.9 L613.9,432.8 L611.6,429.7 L609.4,426.6 L607.3,423.5 L605.2,420.3 L603.2,417.2 L601.4,414.1 L599.6,410.9 L597.8,407.8 L596.2,404.7 L594.7,401.5 L593.2,398.4 L591.8,395.2 L590.6,392.1 L589.4,388.9 L588.2,385.8 L587.2,382.6 L586.3,379.5 L585.4,376.3 L584.7,373.2 L584.0,370.0 L583.5,366.8 L583.0,363.7 L582.6,360.5 L582.3,357.4 L582.1,354.2 L582.0,351.0 L581.9,347.9 L582.0,344.7 L582.2,341.5 L582.4,338.4 L582.8,335.2 L583.2,332.1 L583.7,328.9 L584.4,325.7 L585.1,322.6 L585.9,319.4 L586.8,316.2 L587.8,313.1 L588.8,309.9 L590.0,306.7 L591.3,303.6 L592.6,300.4 L594.0,297.2 L595.6,294.1 L597.2,290.9 L598.9,287.7 L600.7,284.6 L602.5,281.4 L604.5,278.3 L606.5,275.1 L608.7,271.9" fill="none" stroke="#ffb20d" stroke-width="1.389" stroke-dasharray="1.389 2.292"/>
<path d="M742.8,561.3 L744.3,560.7 L745.2,559.9 L745.6,559.0 L745.6,557.8 L745.1,556.5 L744.2,555.1 L742.9,553.5 L741.3,551.8 L739.5,549.9 L737.4,548.0 L735.0,546.0 L732.5,543.8 L729.8,541.6 L727.0,539.3 L724.0,536.9 L720.9,534.5 L717.8,532.0 L714.5,529.5 L711.2,526.9 L707.8,524.3 L704.5,521.6 L701.0,518.9 L697.6,516.2 L694.1,513.5 L690.7,510.7 L687.2,507.9 L683.7,505.0 L680.3,502.2 L676.9,499.3 L673.4,496.4 L670.1,493.5 L666.7,490.5 L663.4,487.6 L660.1,484.6 L656.9,481.7 L653.7,478.7 L650.5,475.7 L647.5,472.7 L644.4,469.7 L641.4,466.7 L638.5,463.6 L635.6,460.6 L632.8,457.5 L630.0,454.5 L627.4,451.4 L624.7,448.4 L622.2,445.3 L619.7,442.2 L617.3,439.1 L615.0,436.0 L612.7,432.9 L610.5,429.8 L608.4,426.7 L606.4,423.6 L604.4,420.5 L602.5,417.4 L600.7,414.3 L599.0,411.2 L597.4,408.1 L595.8,404.9 L594.4,401.8 L593.0,398.7 L591.7,395.5 L590.5,392.4 L589.4,389.3 L588.3,386.1 L587.4,383.0 L586.5,379.9 L585.7,376.7 L585.1,373.6 L584.5,370.4 L584.0,367.3 L583.6,364.1 L583.2,361.0 L583.0,357.8 L582.9,354.7 L582.8,351.5 L582.9,348.4 L583.0,345.2 L583.2,342.1 L583.5,338.9 L583.9,335.8 L584.4,332.6 L585.0,329.5 L585.7,326.3 L586.5,323.1 L587.3,320.0 L588.3,316.8 L589.3,313.7 L590.4,310.5 L591.7,307.4 L593.0,304.2 L594.4,301.1 L595.8,297.9 L597.4,294.8 L599.1,291.6 L600.8,288.4 L602.6,285.3 L604.6,282.1 L606.5,279.0 L608.6,275.8 L610.8,272.7" fill="none" stroke="#ffb20d" stroke-width="1.389" stroke-dasharray="1.389 2.292"/>
<path d="M881.7,554.6 L879.9,551.4 L878.1,548.2 L876.3,545.0 L874.5,541.8 L872.7,538.6 L870.9,535.4 L869.2,532.2 L867.4,529.0 L865.6,525.8 L863.9,522.6 L862.2,519.4 L860.4,516.1 L858.7,512.9 L857.0,509.7 L855.3,506.4 L853.7,503.2 L852.0,500.0 L850.4,496.7 L848.7,493.5 L847.1,490.3 L845.5,487.0 L843.9,483.8 L842.4,480.5 L840.8,477.3 L839.3,474.1 L837.8,470.8 L836.3,467.6 L834.8,464.3 L833.4,461.1 L831.9,457.8 L830.5,454.6 L829.2,451.4 L827.8,448.1 L826.4,444.9 L825.1,441.6 L823.8,438.4 L822.6,435.1 L821.3,431.9 L820.1,428.6 L818.9,425.4 L817.7,422.1 L816.6,418.9 L815.4,415.6 L814.3,412.4 L813.3,409.1 L812.2,405.9 L811.2,402.6 L810.2,399.4 L809.3,396.1 L808.3,392.9 L807.4,389.6 L806.5,386.4 L805.7,383.1 L804.9,379.9 L804.1,376.6 L803.3,373.4 L802.6,370.1 L801.9,366.9 L801.2,363.6 L800.6,360.4 L800.0,357.1 L799.4,353.9 L798.9,350.6 L798.4,347.4 L797.9,344.1 L797.4,340.9 L797.0,337.6 L796.6,334.4 L796.3,331.1 L795.9,327.9 L795.7,324.6 L795.4,321.4 L795.2,318.1 L795.0,314.9 L794.8,311.6 L794.7,308.4 L794.6,305.1 L794.5,301.9 L794.5,298.6 L794.5,295.4 L794.5,292.1" fill="none" stroke="#ff1d00" stroke-width="1.389" stroke-dasharray="1.389 2.292"/>
<path d="M829.7,559.7 L828.4,557.1 L827.0,554.5 L825.5,551.8 L824.0,549.0 L822.5,546.2 L821.0,543.3 L819.4,540.5 L817.8,537.5 L816.2,534.6 L814.6,531.6 L813.0,528.7 L811.4,525.7 L809.8,522.6 L808.2,519.6 L806.7,516.5 L805.1,513.5 L803.6,510.4 L802.1,507.3 L800.6,504.2 L799.1,501.1 L797.6,498.0 L796.2,494.9 L794.8,491.7 L793.4,488.6 L792.1,485.5 L790.7,482.3 L789.4,479.1 L788.1,476.0 L786.9,472.8 L785.7,469.7 L784.5,466.5 L783.4,463.3 L782.2,460.1 L781.1,457.0 L780.1,453.8 L779.1,450.6 L778.1,447.4 L777.1,444.2 L776.2,441.0 L775.4,437.8 L774.5,434.6 L773.7,431.4 L772.9,428.2 L772.2,425.0 L771.5,421.8 L770.9,418.6 L770.3,415.4 L769.7,412.2 L769.1,409.0 L768.6,405.8 L768.2,402.5 L767.8,399.3 L767.4,396.1 L767.0,392.9 L766.7,389.7 L766.5,386.5 L766.2,383.2 L766.1,380.0 L765.9,376.8 L765.8,373.6 L765.8,370.4 L765.7,367.1 L765.8,363.9 L765.8,360.7 L765.9,357.5 L766.1,354.2 L766.2,351.0 L766.5,347.8 L766.7,344.6 L767.0,341.3 L767.4,338.1 L767.8,334.9 L768.2,331.7 L768.7,328.4 L769.2,325.2 L769.7,322.0 L770.3,318.8 L770.9,315.5 L771.6,312.3 L772.3,309.1 L773.0,305.9 L773.8,302.6 L774.6,299.4 L775.5,296.2 L776.4,293.0" fill="none" stroke="#ff1d00" stroke-width="1.389" stroke-dasharray="1.389 2.292"/>
<path d="M645.6,475.6 L646.8,474.4 L648.0,473.1 L649.1,471.8 L650.1,470.4 L651.1,469.0 L652.1,467.6 L653.0,466.1 L653.8,464.5 L654.6,462.9 L655.4,461.3 L656.1,459.6 L656.9,457.9 L657.5,456.1 L658.2,454.3 L658.9,452.5 L659.5,450.6 L660.1,448.7 L660.8,446.8 L661.4,444.9 L662.0,442.9 L662.6,440.9 L663.2,438.8 L663.9,436.8 L664.5,434.7 L665.1,432.6 L665.8,430.4 L666.4,428.3 L667.1,426.1 L667.8,423.9 L668.5,421.7 L669.2,419.4 L670.0,417.2 L670.8,414.9 L671.6,412.6 L672.4,410.3 L673.2,408.0 L674.1,405.6 L675.0,403.3 L675.9,400.9 L676.9,398.6 L677.9,396.2 L678.9,393.8 L679.9,391.4 L681.0,388.9 L682.1,386.5 L683.3,384.1 L684.5,381.6 L685.7,379.2 L686.9,376.7 L688.2,374.2 L689.5,371.7 L690.9,369.3 L692.3,366.8 L693.7,364.3 L695.2,361.8 L696.7,359.2 L698.2,356.7 L699.8,354.2 L701.4,351.7 L703.0,349.2 L704.7,346.6 L706.4,344.1 L708.2,341.5 L710.0,339.0 L711.8,336.5 L713.6,333.9 L715.5,331.4 L717.5,328.8 L719.4,326.3 L721.4,323.7 L723.5,321.2 L725.5,318.6 L727.6,316.1 L729.8,313.5 L731.9,311.0 L734.1,308.4 L736.3,305.9 L738.6,303.3 L740.9,300.8 L743.2,298.2 L745.5,295.7 L747.9,293.2 L750.3,290.6 L752.7,288.1 L755.2,285.6 L757.7,283.1 L760.2,280.5 L762.7,278.0" fill="none" stroke="#ff1d00" stroke-width="1.389" stroke-dasharray="1.389 2.292"/>
<path d="M889.2,573.3 L885.7,572.5 L882.2,571.4 L878.5,570.2 L874.8,568.7 L870.9,567.0 L866.9,565.2 L862.9,563.2 L858.7,561.2 L854.4,558.9 L850.1,556.6 L845.7,554.2 L841.2,551.8 L836.7,549.2 L832.2,546.6 L827.6,544.0 L822.9,541.2 L818.3,538.5 L813.6,535.7 L808.9,532.9 L804.1,530.0 L799.4,527.1 L794.7,524.2 L789.9,521.3 L785.2,518.4 L780.5,515.4 L775.8,512.4 L771.1,509.4 L766.4,506.4 L761.8,503.3 L757.2,500.3 L752.6,497.2 L748.0,494.2 L743.5,491.1 L739.0,488.0 L734.5,484.9 L730.0,481.8 L725.7,478.7 L721.3,475.6 L717.0,472.5 L712.7,469.4 L708.5,466.2 L704.4,463.1 L700.3,460.0 L696.2,456.8 L692.2,453.7 L688.2,450.5 L684.3,447.4 L680.5,444.2 L676.7,441.1 L673.0,437.9 L669.4,434.7 L665.8,431.6 L662.3,428.4 L658.8,425.2 L655.5,422.0 L652.2,418.9 L648.9,415.7 L645.8,412.5 L642.7,409.3 L639.6,406.1 L636.7,402.9 L633.8,399.8 L631.1,396.6 L628.3,393.4 L625.7,390.2 L623.2,387.0 L620.7,383.8 L618.3,380.6 L616.0,377.4 L613.8,374.2 L611.6,371.0 L609.6,367.8 L607.6,364.6 L605.8,361.4 L604.0,358.2 L602.3,355.0 L600.6,351.8 L599.1,348.6 L597.7,345.4 L596.3,342.2 L595.1,339.0 L593.9,335.8 L592.8,332.6 L591.8,329.4 L590.9,326.2 L590.1,323.0 L589.4,319.8 L588.8,316.6 L588.3,313.4 L587.9,310.2 L587.5,307.0 L587.3,303.8 L587.1,300.6 L587.1,297.4 L587.1,294.2 L587.2,291.0 L587.4,287.8 L587.7,284.6 L588.1,281.4 L588.6,278.2 L589.2,275.0 L589.9,271.8 L590.7,268.6 L591.5,265.4 L592.5,262.2 L593.5,259.0 L594.7,255.8 L595.9,252.6 L597.2,249.4 L598.6,246.2 L600.1,243.0 L601.7,239.8 L603.3,236.6 L605.1,233.4 L606.9,230.3" fill="none" stroke="#dd11ff" stroke-width="1.389" stroke-dasharray="1.389 2.292"/>
<path d="M811.9,583.6 L810.5,582.1 L808.4,580.4 L805.6,578.5 L802.4,576.4 L798.8,574.1 L794.8,571.7 L790.6,569.2 L786.2,566.6 L781.6,563.9 L776.9,561.2 L772.1,558.4 L767.2,555.6 L762.2,552.7 L757.3,549.7 L752.2,546.8 L747.2,543.8 L742.1,540.8 L737.1,537.8 L732.0,534.8 L727.0,531.7 L722.0,528.6 L717.0,525.6 L712.0,522.5 L707.1,519.4 L702.2,516.3 L697.4,513.1 L692.6,510.0 L687.8,506.9 L683.1,503.7 L678.4,500.6 L673.8,497.4 L669.2,494.3 L664.8,491.1 L660.3,487.9 L656.0,484.8 L651.7,481.6 L647.4,478.4 L643.3,475.2 L639.2,472.0 L635.1,468.9 L631.2,465.7 L627.3,462.5 L623.5,459.3 L619.8,456.1 L616.2,452.9 L612.6,449.7 L609.1,446.5 L605.8,443.3 L602.5,440.1 L599.2,436.9 L596.1,433.7 L593.1,430.5 L590.1,427.3 L587.3,424.0 L584.5,420.8 L581.8,417.6 L579.3,414.4 L576.8,411.2 L574.4,408.0 L572.1,404.8 L569.9,401.5 L567.8,398.3 L565.8,395.1 L563.9,391.9 L562.2,388.7 L560.5,385.5 L558.9,382.2 L557.4,379.0 L556.0,375.8 L554.7,372.6 L553.5,369.3 L552.5,366.1 L551.5,362.9 L550.6,359.7 L549.9,356.5 L549.2,353.2 L548.6,350.0 L548.2,346.8 L547.9,343.6 L547.6,340.3 L547.5,337.1 L547.5,333.9 L547.6,330.7 L547.7,327.4 L548.0,324.2 L548.4,321.0 L549.0,317.8 L549.6,314.5 L550.3,311.3 L551.1,308.1 L552.0,304.9 L553.1,301.6 L554.2,298.4 L555.4,295.2 L556.8,292.0 L558.2,288.8 L559.8,285.5 L561.4,282.3 L563.2,279.1 L565.0,275.9 L567.0,272.6 L569.1,269.4 L571.2,266.2 L573.5,263.0 L575.8,259.8 L578.3,256.5 L580.8,253.3 L583.4,250.1 L586.2,246.9 L589.0,243.7 L591.9,240.4 L594.9,237.2 L598.0,234.0 L601.2,230.8" fill="none" stroke="#dd11ff" stroke-width="1.389" stroke-dasharray="1.389 2.292"/>
<path d="M1000.8,572.9 L993.5,576.1 L986.2,579.3 L978.9,582.5 L971.6,585.7 L964.3,588.9 L957.1,592.1 L949.9,595.2 L942.9,598.2 L936.2,601.2 L930.1,603.9 M888.9,605.2 L887.2,602.7 L885.0,599.9 L882.7,596.9 L880.2,593.8 L877.7,590.6 L875.2,587.5 L872.6,584.3 L870.0,581.1 L867.5,577.9 L864.9,574.7 L862.4,571.4 L859.8,568.2 L857.3,565.0 L854.8,561.8 L852.3,558.5 L849.8,555.3 L847.3,552.0 L844.8,548.8 L842.4,545.5 L839.9,542.3 L837.5,539.1 L835.1,535.8 L832.7,532.6 L830.4,529.3 L828.0,526.1 L825.7,522.8 L823.4,519.6 L821.1,516.3 L818.9,513.1 L816.7,509.8 L814.5,506.6 L812.3,503.3 L810.2,500.1 L808.1,496.8 L806.0,493.5 L803.9,490.3 L801.9,487.0 L799.9,483.8 L797.9,480.5 L796.0,477.3 L794.1,474.0 L792.2,470.8 L790.4,467.5 L788.6,464.3 L786.8,461.0 L785.1,457.8 L783.4,454.5 L781.7,451.2 L780.1,448.0 L778.5,444.7 L777.0,441.5 L775.5,438.2 L774.0,435.0 L772.6,431.7 L771.2,428.5 L769.8,425.2 L768.5,422.0 L767.2,418.7 L766.0,415.4 L764.8,412.2 L763.7,408.9 L762.6,405.7 L761.5,402.4 L760.5,399.2 L759.5,395.9 L758.6,392.7 L757.7,389.4 L756.8,386.1 L756.0,382.9 L755.3,379.6 L754.5,376.4 L753.9,373.1 L753.3,369.9 L752.7,366.6 L752.1,363.4 L751.7,360.1 L751.2,356.8 L750.8,353.6 L750.5,350.3 L750.2,347.1 L749.9,343.8 L749.7,340.6 L749.5,337.3 L749.4,334.0 L749.4,330.8 L749.3,327.5 L749.3,324.3 L749.4,321.0 L749.5,317.8 L749.7,314.5 L749.9,311.3 L750.2,308.0 L750.5,304.7 L750.8,301.5 L751.2,298.2 L751.6,295.0 L752.1,291.7 L752.7,288.5 L753.2,285.2 L753.9,282.0 L754.5,278.7 L755.2,275.4 L756.0,272.2 L756.8,268.9 L757.6,265.7 L758.5,262.4 L759.5,259.2 L760.4,255.9 L761.5,252.7" fill="none" stroke="#a4ff28" stroke-width="1.389" stroke-dasharray="1.389 2.292"/>
<path d="M601.2,268.2 h6.94 M604.7,264.8 v6.94 M603.9,271.9 h6.94 M607.4,268.4 v6.94 M592.3,266.8 h6.94 M595.8,263.4 v6.94 M610.5,272.0 h6.94 M614.0,268.5 v6.94 M602.9,271.3 h6.94 M606.4,267.9 v6.94 M627.2,264.8 h6.94 M630.7,261.3 v6.94 M602.9,271.4 h6.94 M606.4,267.9 v6.94 M605.2,271.9 h6.94 M608.7,268.5 v6.94 M607.3,272.7 h6.94 M610.8,269.2 v6.94 M791.1,292.1 h6.94 M794.5,288.6 v6.94 M772.9,293.0 h6.94 M776.4,289.5 v6.94 M759.2,278.0 h6.94 M762.7,274.6 v6.94 M603.4,230.3 h6.94 M606.9,226.8 v6.94 M597.8,230.8 h6.94 M601.2,227.3 v6.94 M758.0,252.7 h6.94 M761.5,249.2 v6.94" fill="none" stroke="#ff0000" stroke-width="1.389"/>
<path d="M626.2,231.9 L627.9,229.8 L629.4,227.7 L630.7,225.6 L631.9,223.6 L632.9,221.6 L633.7,219.7 L634.3,217.9 L634.7,216.1 L634.8,214.5 L634.7,213.0 L634.4,211.7 L633.8,210.5 L633.0,209.4 L631.9,208.6 L630.6,207.9 L629.1,207.4 L627.3,207.1 L625.3,207.0 L623.1,207.1 L620.7,207.4 L618.2,207.9 L615.5,208.6 L612.7,209.4 L609.8,210.5 L606.8,211.7 L603.8,213.0 L600.8,214.5 L597.8,216.1 L594.8,217.9 L592.0,219.7 L589.2,221.6 L586.6,223.6 L584.2,225.6 L581.9,227.7 L579.9,229.8 L578.0,231.9 L576.4,234.0 L575.1,236.0 L573.9,238.1 L573.1,240.0 L572.5,241.9 L572.1,243.7 L572.1,245.4 L572.2,247.0 L572.6,248.5 L573.3,249.8 L574.1,251.1 L575.2,252.1 L576.5,253.1 L577.9,253.8 L579.5,254.4 L581.3,254.8 L583.2,255.1 L585.3,255.2 L587.4,255.1 L589.7,254.8 L592.0,254.4 L594.4,253.8 L596.8,253.1 L599.2,252.1 L601.7,251.1 L604.2,249.8 L606.6,248.5 L609.1,247.0 L611.5,245.4 L613.8,243.7 L616.1,241.9 L618.4,240.0 L620.5,238.1 L622.5,236.0 L624.4,234.0 L626.2,231.9Z" fill="none" stroke="#dd11ff" stroke-width="2.083"/>
<path d="M630.6,271.8 L631.4,269.7 L632.1,267.6 L632.6,265.5 L632.9,263.5 L633.1,261.5 L633.1,259.7 L632.9,257.9 L632.6,256.1 L632.1,254.6 L631.3,253.1 L630.4,251.8 L629.4,250.6 L628.1,249.6 L626.7,248.8 L625.1,248.1 L623.3,247.6 L621.4,247.4 L619.4,247.3 L617.2,247.4 L615.0,247.6 L612.7,248.1 L610.2,248.8 L607.8,249.6 L605.3,250.6 L602.9,251.8 L600.4,253.1 L598.0,254.6 L595.7,256.1 L593.5,257.9 L591.4,259.7 L589.5,261.5 L587.7,263.5 L586.1,265.5 L584.6,267.6 L583.4,269.7 L582.4,271.8 L581.7,273.9 L581.1,275.9 L580.8,278.0 L580.7,279.9 L580.9,281.8 L581.2,283.7 L581.8,285.4 L582.6,287.0 L583.6,288.6 L584.8,289.9 L586.1,291.2 L587.6,292.3 L589.3,293.2 L591.0,294.0 L592.9,294.6 L594.8,295.1 L596.8,295.3 L598.9,295.4 L601.0,295.3 L603.2,295.1 L605.3,294.6 L607.5,294.0 L609.6,293.2 L611.7,292.3 L613.7,291.2 L615.7,289.9 L617.6,288.6 L619.5,287.0 L621.3,285.4 L622.9,283.7 L624.5,281.8 L626.0,279.9 L627.3,278.0 L628.6,275.9 L629.7,273.9 L630.6,271.8Z" fill="none" stroke="#ffb20d" stroke-width="2.083"/>
<path d="M802.6,293.6 L802.7,291.5 L802.6,289.4 L802.4,287.3 L802.0,285.3 L801.5,283.4 L800.7,281.5 L799.9,279.7 L798.8,278.0 L797.6,276.5 L796.3,275.0 L794.9,273.7 L793.3,272.6 L791.6,271.6 L789.8,270.8 L787.9,270.1 L786.0,269.6 L783.9,269.4 L781.9,269.3 L779.7,269.4 L777.6,269.6 L775.5,270.1 L773.4,270.8 L771.3,271.6 L769.3,272.6 L767.3,273.7 L765.4,275.0 L763.6,276.5 L762.0,278.0 L760.4,279.7 L759.1,281.5 L757.8,283.4 L756.8,285.3 L755.9,287.3 L755.2,289.4 L754.7,291.5 L754.4,293.6 L754.3,295.7 L754.4,297.7 L754.7,299.8 L755.2,301.8 L755.9,303.7 L756.7,305.5 L757.8,307.3 L759.0,308.9 L760.4,310.5 L761.9,311.9 L763.5,313.1 L765.2,314.2 L767.1,315.2 L769.0,316.0 L771.0,316.6 L773.0,317.1 L775.1,317.3 L777.2,317.4 L779.3,317.3 L781.4,317.1 L783.4,316.6 L785.4,316.0 L787.4,315.2 L789.3,314.2 L791.1,313.1 L792.8,311.9 L794.4,310.5 L795.9,308.9 L797.2,307.3 L798.4,305.5 L799.5,303.7 L800.4,301.8 L801.2,299.8 L801.8,297.7 L802.3,295.7 L802.6,293.6Z" fill="none" stroke="#ff1d00" stroke-width="2.083"/>
<path d="M773.2,253.0 L773.8,250.9 L774.2,248.8 L774.4,246.7 L774.5,244.7 L774.3,242.7 L774.1,240.8 L773.6,239.0 L772.9,237.3 L772.1,235.7 L771.2,234.2 L770.0,232.9 L768.7,231.7 L767.3,230.7 L765.7,229.9 L763.9,229.2 L762.1,228.7 L760.1,228.4 L758.1,228.3 L755.9,228.4 L753.7,228.7 L751.5,229.2 L749.2,229.9 L746.9,230.7 L744.7,231.7 L742.4,232.9 L740.2,234.2 L738.1,235.7 L736.1,237.3 L734.2,239.0 L732.4,240.8 L730.7,242.7 L729.2,244.7 L727.9,246.7 L726.7,248.8 L725.8,250.9 L725.0,253.0 L724.5,255.1 L724.1,257.1 L724.0,259.2 L724.1,261.1 L724.4,263.0 L724.9,264.9 L725.6,266.6 L726.5,268.2 L727.6,269.7 L728.8,271.1 L730.2,272.3 L731.7,273.4 L733.4,274.3 L735.1,275.1 L737.0,275.7 L739.0,276.1 L741.0,276.4 L743.1,276.5 L745.2,276.4 L747.3,276.1 L749.4,275.7 L751.6,275.1 L753.7,274.3 L755.7,273.4 L757.7,272.3 L759.7,271.1 L761.6,269.7 L763.3,268.2 L765.0,266.6 L766.6,264.9 L768.0,263.0 L769.4,261.1 L770.6,259.2 L771.6,257.1 L772.5,255.1 L773.2,253.0Z" fill="none" stroke="#a4ff28" stroke-width="2.083"/>
<path d="M515.8,462.0 L515.9,463.0" fill="none" stroke="#ffb20d" stroke-width="1.389"/>
<path d="M1184.6,518.9 L1181.9,519.2 L1179.2,519.5 L1176.7,519.8 L1174.2,520.0" fill="none" stroke="#ffb20d" stroke-width="1.389"/>
<path d="M686.3,521.7 L688.0,523.0 L689.7,524.3 L691.4,525.6 L693.0,526.9 L694.6,528.1 L696.2,529.4 L697.8,530.6 L699.3,531.8 L700.8,533.0" fill="none" stroke="#ffb20d" stroke-width="1.389"/>
<path d="M724.2,506.7 L726.4,508.4 L728.6,510.0 L730.7,511.6 L733.0,513.3 L735.2,514.9 L737.4,516.6 L739.6,518.2 L741.9,519.9 L744.2,521.5 L746.4,523.2 L748.7,524.8 L751.0,526.5 L753.3,528.1 L755.6,529.7 L758.0,531.4 L760.3,533.0" fill="none" stroke="#ffb20d" stroke-width="1.389"/>
<path d="M797.0,552.2 L799.7,553.9 L802.5,555.6 L805.3,557.3 L808.0,559.0 L810.8,560.7 L813.6,562.4 L816.4,564.1 L819.2,565.8" fill="none" stroke="#ffb20d" stroke-width="1.389"/>
<path d="M872.5,551.7 L874.3,552.6 L876.1,553.5 L877.9,554.3 L879.6,555.2 L881.4,555.9 L883.1,556.7 L884.8,557.4 L886.5,558.1 L888.3,558.7 L889.9,559.3 L891.6,559.8 L893.3,560.3" fill="none" stroke="#ffb20d" stroke-width="1.389"/>
<path d="M897.4,582.1 L899.1,582.4 L900.7,582.5 L902.4,582.6 L904.1,582.6 L905.7,582.5 L907.4,582.4 L909.1,582.1" fill="none" stroke="#ffb20d" stroke-width="1.389"/>
<path d="M1037.5,555.8 L1039.1,554.6 L1040.8,553.3" fill="none" stroke="#ffb20d" stroke-width="1.389"/>
<path d="M1060.8,561.7 L1058.9,561.8 L1057.2,561.8 L1055.7,561.8 L1054.3,561.7 L1053.0,561.6 L1051.9,561.4 L1050.9,561.2 L1050.0,560.9 L1049.3,560.6 L1048.7,560.2 L1048.2,559.8 L1047.9,559.3 L1047.6,558.8 L1047.5,558.3" fill="none" stroke="#ffb20d" stroke-width="1.389"/>
<path d="M881.7,554.6 L882.6,556.3 L883.5,558.0 L884.5,559.8 L885.4,561.5 L886.3,563.2 L887.2,564.9 L888.2,566.6 L889.1,568.3 L890.0,570.0" fill="none" stroke="#ff1d00" stroke-width="1.389"/>
<path d="M829.7,559.7 L830.4,561.0 L831.0,562.2 L831.6,563.5 L832.2,564.7" fill="none" stroke="#ff1d00" stroke-width="1.389"/>
<path d="M645.6,475.6 L645.0,477.0" fill="none" stroke="#ff1d00" stroke-width="1.389"/>
<path d="M889.2,573.3 L890.9,573.6 L892.6,573.8 L894.2,574.0 L895.9,574.1 L897.5,574.2 L899.2,574.1 L900.8,574.1 L902.4,573.9 L904.1,573.7 L905.7,573.4 L907.3,573.0 L909.0,572.6 L910.6,572.1 L912.3,571.6 L914.0,571.0" fill="none" stroke="#dd11ff" stroke-width="1.389"/>
<path d="M991.0,584.8 L988.5,584.9 L986.4,585.0" fill="none" stroke="#dd11ff" stroke-width="1.389"/>
<path d="M1000.8,572.9 L1005.1,571.0 L1009.4,569.1 L1013.7,567.1 L1018.0,565.2" fill="none" stroke="#a4ff28" stroke-width="1.389"/>
<path d="M514.8,461.9h2.2v2.2h-2.2z M1173.1,518.9h2.2v2.2h-2.2z M699.7,531.9h2.2v2.2h-2.2z M759.2,531.9h2.2v2.2h-2.2z M818.1,564.7h2.2v2.2h-2.2z M892.2,559.2h2.2v2.2h-2.2z M908.0,581.0h2.2v2.2h-2.2z M1039.7,552.2h2.2v2.2h-2.2z M1046.4,557.2h2.2v2.2h-2.2z M888.9,568.9h2.2v2.2h-2.2z M831.1,563.6h2.2v2.2h-2.2z M643.9,475.9h2.2v2.2h-2.2z M912.9,569.9h2.2v2.2h-2.2z M985.3,583.9h2.2v2.2h-2.2z M1016.9,564.1h2.2v2.2h-2.2z" fill="#ff6347" fill-opacity="0.9"/>
<text transform="translate(602.80,234.05) translate(-11.33,0) scale(0.9654,1.0596)" font-family="'Liberation Sans',sans-serif" font-size="11.11" fill="#fff">EGE</text>
<text transform="translate(606.70,274.25) translate(-9.87,0) scale(0.9994,1.0596)" font-family="'Liberation Sans',sans-serif" font-size="11.11" fill="#fff">ORI</text>
<text transform="translate(778.70,296.65) translate(-10.29,0) scale(0.9898,1.0596)" font-family="'Liberation Sans',sans-serif" font-size="11.11" fill="#fff">STA</text>
<text transform="translate(749.10,255.75) translate(-10.64,0) scale(0.9948,1.0596)" font-family="'Liberation Sans',sans-serif" font-size="11.11" fill="#fff">CTA</text>
<text transform="translate(315.00,30.40) translate(0.00,0) scale(1.0033,1.1062)" font-family="'Liberation Mono',monospace" font-size="13.89" fill="#fff">NZ005H</text>
<text transform="translate(315.00,43.45) translate(0.00,0) scale(1.0033,1.1062)" font-family="'Liberation Mono',monospace" font-size="13.89" fill="#fff">Beg: 20251019 08:02:27 (sol = 205.84°)</text>
<text transform="translate(315.00,56.50) translate(0.00,0) scale(1.0033,1.1062)" font-family="'Liberation Mono',monospace" font-size="13.89" fill="#fff">End: 20251019 16:12:59 (sol = 206.18°)</text>
<text transform="translate(315.00,69.25) translate(0.00,0) scale(1.0033,1.1062)" font-family="'Liberation Mono',monospace" font-size="13.89" fill="#fff">--------------------------------------</text>
<text transform="translate(315.00,82.00) translate(0.00,0) scale(1.0033,1.1062)" font-family="'Liberation Mono',monospace" font-size="13.89" fill="#fff">...: 22</text>
<text transform="translate(315.00,95.05) translate(0.00,0) scale(1.0033,1.1062)" font-family="'Liberation Mono',monospace" font-size="13.89" fill="#fff">ORI: 9</text>
<text transform="translate(315.00,108.10) translate(0.00,0) scale(1.0033,1.1062)" font-family="'Liberation Mono',monospace" font-size="13.89" fill="#fff">STA: 3</text>
<text transform="translate(315.00,121.15) translate(0.00,0) scale(1.0033,1.1062)" font-family="'Liberation Mono',monospace" font-size="13.89" fill="#fff">EGE: 2</text>
<text transform="translate(315.00,134.20) translate(0.00,0) scale(1.0033,1.1062)" font-family="'Liberation Mono',monospace" font-size="13.89" fill="#fff">CTA: 1</text>
<clipPath id="axclip"><rect x="19.50" y="641.70" width="1766.10" height="200.60"/></clipPath>
<g clip-path="url(#axclip)">
<text transform="translate(149.30,696.00) rotate(-90) scale(0.8398,1)" font-family="'Liberation Sans',sans-serif" font-size="30.52" fill="#ffffff" fill-opacity="0.3">APR</text>
<text transform="translate(294.30,699.30) rotate(-90) scale(0.8453,1)" font-family="'Liberation Sans',sans-serif" font-size="30.52" fill="#ffffff" fill-opacity="0.3">MAY</text>
<text transform="translate(436.70,686.00) rotate(-90) scale(0.7300,1)" font-family="'Liberation Sans',sans-serif" font-size="30.09" fill="#ffffff" fill-opacity="0.3">JUN</text>
<text transform="translate(576.00,686.00) rotate(-90) scale(0.8521,1)" font-family="'Liberation Sans',sans-serif" font-size="29.51" fill="#ffffff" fill-opacity="0.3">JUL</text>
<text transform="translate(723.30,699.30) rotate(-90) scale(0.8466,1)" font-family="'Liberation Sans',sans-serif" font-size="30.52" fill="#ffffff" fill-opacity="0.3">AUG</text>
<text transform="translate(871.70,692.70) rotate(-90) scale(0.7924,1)" font-family="'Liberation Sans',sans-serif" font-size="30.52" fill="#ffffff" fill-opacity="0.3">SEP</text>
<text transform="translate(1016.00,698.70) rotate(-90) scale(0.8443,1)" font-family="'Liberation Sans',sans-serif" font-size="30.52" fill="#ffffff" fill-opacity="0.3">OCT</text>
<text transform="translate(1169.00,702.00) rotate(-90) scale(0.8451,1)" font-family="'Liberation Sans',sans-serif" font-size="30.96" fill="#ffffff" fill-opacity="0.3">NOV</text>
<text transform="translate(1318.30,698.70) rotate(-90) scale(0.8057,1)" font-family="'Liberation Sans',sans-serif" font-size="31.40" fill="#ffffff" fill-opacity="0.3">DEC</text>
<text transform="translate(1469.30,685.30) rotate(-90) scale(0.7284,1)" font-family="'Liberation Sans',sans-serif" font-size="30.52" fill="#ffffff" fill-opacity="0.3">JAN</text>
<text transform="translate(1627.70,694.30) rotate(-90) scale(0.7849,1)" font-family="'Liberation Sans',sans-serif" font-size="30.52" fill="#ffffff" fill-opacity="0.3">FEB</text>
<text transform="translate(1765.70,703.30) rotate(-90) scale(0.8189,1)" font-family="'Liberation Sans',sans-serif" font-size="31.10" fill="#ffffff" fill-opacity="0.3">MAR</text>
</g>
<g fill="none" stroke="#ffffff" stroke-opacity="0.5" stroke-width="2.083" stroke-dasharray="2.083 3.437">
<path d="M74.0,842.30 L74.0,641.70"/>
<path d="M218.0,842.30 L218.0,641.70"/>
<path d="M365.0,842.30 L365.0,641.70"/>
<path d="M505.0,842.30 L505.0,641.70"/>
<path d="M650.0,842.30 L650.0,641.70"/>
<path d="M797.0,842.30 L797.0,641.70"/>
<path d="M940.0,842.30 L940.0,641.70"/>
<path d="M1091.0,842.30 L1091.0,641.70"/>
<path d="M1239.0,842.30 L1239.0,641.70"/>
<path d="M1394.0,842.30 L1394.0,641.70"/>
<path d="M1548.0,842.30 L1548.0,641.70"/>
<path d="M1687.0,842.30 L1687.0,641.70"/>
</g>
<g stroke="#ff0000" stroke-width="1.15" stroke-dasharray="5.139 2.222" fill="none">
<path d="M1029.50,842.00 V641.50"/>
<path d="M1031.50,842.00 V641.50"/>
</g>
<g stroke-width="4.167" stroke-linecap="square" fill="none">
<path d="M107.80,834.00 H126.93" stroke="#ec84ef"/>
<path d="M166.67,834.00 H342.78" stroke="#ec84ef"/>
<path d="M367.81,834.00 H622.40" stroke="#ec84ef"/>
<path d="M637.62,834.00 H784.29" stroke="#ec84ef"/>
<path d="M809.32,834.00 H897.12" stroke="#ec84ef"/>
<path d="M922.15,834.00 H970.71" stroke="#ec84ef"/>
<path d="M985.93,834.00 H1063.92" stroke="#ec84ef"/>
<path d="M1084.04,834.00 H1201.28" stroke="#ec84ef"/>
<path d="M1245.93,834.00 H1323.92" stroke="#ec84ef"/>
<path d="M1339.14,834.00 H1353.35" stroke="#ec84ef"/>
<path d="M1383.29,834.00 H1441.66" stroke="#ec84ef"/>
<path d="M1461.78,834.00 H1510.34" stroke="#ec84ef"/>
<path d="M1525.55,834.00 H1544.68" stroke="#ec84ef"/>
<path d="M1726.69,834.00 H1745.81" stroke="#ec84ef"/>
<path d="M1761.03,834.00 H1780.15" stroke="#ec84ef"/>
<path d="M166.67,818.00 H185.79" stroke="#dd11ff"/>
<path d="M225.54,818.00 H283.91" stroke="#dd11ff"/>
<path d="M313.84,818.00 H337.87" stroke="#dd11ff"/>
<path d="M367.81,818.00 H489.95" stroke="#dd11ff"/>
<path d="M510.07,818.00 H651.84" stroke="#dd11ff"/>
<path d="M706.30,818.00 H735.23" stroke="#dd11ff"/>
<path d="M774.98,818.00 H843.16" stroke="#dd11ff"/>
<path d="M873.09,818.00 H985.43" stroke="#dd11ff"/>
<path d="M1005.55,818.00 H1014.86" stroke="#dd11ff"/>
<path d="M1064.42,818.00 H1211.09" stroke="#dd11ff"/>
<path d="M1245.93,818.00 H1265.05" stroke="#dd11ff"/>
<path d="M1294.99,818.00 H1314.11" stroke="#dd11ff"/>
<path d="M1344.04,818.00 H1363.17" stroke="#dd11ff"/>
<path d="M1388.19,818.00 H1426.94" stroke="#dd11ff"/>
<path d="M1461.78,818.00 H1480.90" stroke="#dd11ff"/>
<path d="M1550.08,818.00 H1569.21" stroke="#dd11ff"/>
<path d="M166.67,802.00 H185.79" stroke="#ff1d00"/>
<path d="M259.88,802.00 H485.04" stroke="#ff1d00"/>
<path d="M510.07,802.00 H612.59" stroke="#ff1d00"/>
<path d="M627.81,802.00 H715.61" stroke="#ff1d00"/>
<path d="M730.83,802.00 H823.54" stroke="#ff1d00"/>
<path d="M951.59,802.00 H1147.31" stroke="#ff1d00"/>
<path d="M1162.53,802.00 H1245.43" stroke="#ff1d00"/>
<path d="M1260.65,802.00 H1441.66" stroke="#ff1d00"/>
<path d="M1461.78,802.00 H1480.90" stroke="#ff1d00"/>
<path d="M1554.99,802.00 H1574.11" stroke="#ff1d00"/>
<path d="M196.11,785.00 H215.23" stroke="#ffb20d"/>
<path d="M323.65,785.00 H504.67" stroke="#ffb20d"/>
<path d="M519.88,785.00 H539.01" stroke="#ffb20d"/>
<path d="M559.13,785.00 H681.27" stroke="#ffb20d"/>
<path d="M809.32,785.00 H828.44" stroke="#ffb20d"/>
<path d="M956.49,785.00 H970.71" stroke="#ffb20d"/>
<path d="M990.83,785.00 H1122.79" stroke="#ffb20d"/>
<path d="M1157.63,785.00 H1215.99" stroke="#ffb20d"/>
<path d="M1245.93,785.00 H1265.05" stroke="#ffb20d"/>
<path d="M1319.51,785.00 H1338.64" stroke="#ffb20d"/>
<path d="M1398.01,785.00 H1417.13" stroke="#ffb20d"/>
<path d="M1466.69,785.00 H1647.70" stroke="#ffb20d"/>
<path d="M343.28,769.00 H367.31" stroke="#fff000"/>
<path d="M411.96,769.00 H445.80" stroke="#fff000"/>
<path d="M470.83,769.00 H489.95" stroke="#fff000"/>
<path d="M529.69,769.00 H543.91" stroke="#fff000"/>
<path d="M564.03,769.00 H588.06" stroke="#fff000"/>
<path d="M618.00,769.00 H646.93" stroke="#fff000"/>
<path d="M961.40,769.00 H985.43" stroke="#fff000"/>
<path d="M1064.42,769.00 H1083.54" stroke="#fff000"/>
<path d="M1103.66,769.00 H1122.79" stroke="#fff000"/>
<path d="M1162.53,769.00 H1191.47" stroke="#fff000"/>
<path d="M1250.83,769.00 H1269.96" stroke="#fff000"/>
<path d="M1427.44,769.00 H1510.34" stroke="#fff000"/>
<path d="M421.77,752.00 H440.89" stroke="#a4ff28"/>
<path d="M534.60,752.00 H553.72" stroke="#a4ff28"/>
<path d="M568.94,752.00 H588.06" stroke="#a4ff28"/>
<path d="M622.90,752.00 H740.14" stroke="#a4ff28"/>
<path d="M971.21,752.00 H1132.60" stroke="#a4ff28"/>
<path d="M1187.06,752.00 H1343.54" stroke="#a4ff28"/>
<path d="M1471.59,752.00 H1490.71" stroke="#a4ff28"/>
<path d="M431.58,736.00 H450.70" stroke="#59d200"/>
<path d="M578.75,736.00 H730.33" stroke="#59d200"/>
<path d="M995.74,736.00 H1103.16" stroke="#59d200"/>
<path d="M1118.38,736.00 H1220.90" stroke="#59d200"/>
<path d="M1265.55,736.00 H1289.58" stroke="#59d200"/>
<path d="M1491.21,736.00 H1510.34" stroke="#59d200"/>
<path d="M593.47,720.00 H612.59" stroke="#00fb73"/>
<path d="M657.24,720.00 H769.57" stroke="#00fb73"/>
<path d="M1074.23,720.00 H1240.52" stroke="#00fb73"/>
<path d="M1265.55,720.00 H1284.67" stroke="#00fb73"/>
<path d="M598.37,703.00 H730.33" stroke="#00e0ff"/>
<path d="M1093.85,703.00 H1117.88" stroke="#00e0ff"/>
<path d="M1201.78,703.00 H1220.90" stroke="#00e0ff"/>
<path d="M1275.36,703.00 H1323.92" stroke="#00e0ff"/>
<path d="M1113.47,687.00 H1132.60" stroke="#000ecd"/>
</g>
<path d="M112.96,834.00 h8.33 M117.12,829.83 v8.33 M241.00,834.00 h8.33 M245.16,829.83 v8.33 M510.81,834.00 h8.33 M514.98,829.83 v8.33 M707.04,834.00 h8.33 M711.21,829.83 v8.33 M832.63,834.00 h8.33 M836.79,829.83 v8.33 M962.14,834.00 h8.33 M966.30,829.83 v8.33 M986.66,834.00 h8.33 M990.83,829.83 v8.33 M1115.69,834.00 h8.33 M1119.85,829.83 v8.33 M1295.72,834.00 h8.33 M1299.89,829.83 v8.33 M1341.84,834.00 h8.33 M1346.01,829.83 v8.33 M1413.46,834.00 h8.33 M1417.63,829.83 v8.33 M1482.14,834.00 h8.33 M1486.31,829.83 v8.33 M1531.20,834.00 h8.33 M1535.37,829.83 v8.33 M1732.33,834.00 h8.33 M1736.50,829.83 v8.33 M1765.69,834.00 h8.33 M1769.86,829.83 v8.33 M172.32,818.00 h8.33 M176.48,813.83 v8.33 M255.71,818.00 h8.33 M259.88,813.83 v8.33 M322.92,818.00 h8.33 M327.09,813.83 v8.33 M437.22,818.00 h8.33 M441.39,813.83 v8.33 M599.11,818.00 h8.33 M603.28,813.83 v8.33 M716.85,818.00 h8.33 M721.02,813.83 v8.33 M792.89,818.00 h8.33 M797.06,813.83 v8.33 M939.08,818.00 h8.33 M943.25,813.83 v8.33 M1006.29,818.00 h8.33 M1010.45,813.83 v8.33 M1153.46,818.00 h8.33 M1157.63,813.83 v8.33 M1251.57,818.00 h8.33 M1255.74,813.83 v8.33 M1300.63,818.00 h8.33 M1304.80,813.83 v8.33 M1349.69,818.00 h8.33 M1353.85,813.83 v8.33 M1403.65,818.00 h8.33 M1407.82,813.83 v8.33 M1467.42,818.00 h8.33 M1471.59,813.83 v8.33 M1555.73,818.00 h8.33 M1559.89,813.83 v8.33 M173.79,802.00 h8.33 M177.95,797.83 v8.33 M378.36,802.00 h8.33 M382.52,797.83 v8.33 M545.15,802.00 h8.33 M549.32,797.83 v8.33 M682.51,802.00 h8.33 M686.68,797.83 v8.33 M741.38,802.00 h8.33 M745.55,797.83 v8.33 M1074.97,802.00 h8.33 M1079.13,797.83 v8.33 M1217.23,802.00 h8.33 M1221.40,797.83 v8.33 M1305.54,802.00 h8.33 M1309.70,797.83 v8.33 M1467.42,802.00 h8.33 M1471.59,797.83 v8.33 M1560.63,802.00 h8.33 M1564.80,797.83 v8.33 M201.75,785.00 h8.33 M205.92,780.83 v8.33 M399.94,785.00 h8.33 M404.11,780.83 v8.33 M525.53,785.00 h8.33 M529.69,780.83 v8.33 M638.85,785.00 h8.33 M643.02,780.83 v8.33 M814.96,785.00 h8.33 M819.13,780.83 v8.33 M958.70,785.00 h8.33 M962.87,780.83 v8.33 M1039.65,785.00 h8.33 M1043.81,780.83 v8.33 M1187.80,785.00 h8.33 M1191.97,780.83 v8.33 M1251.57,785.00 h8.33 M1255.74,780.83 v8.33 M1325.16,785.00 h8.33 M1329.33,780.83 v8.33 M1403.65,785.00 h8.33 M1407.82,780.83 v8.33 M1545.92,785.00 h8.33 M1550.08,780.83 v8.33 M355.79,769.00 h8.33 M359.96,764.83 v8.33 M425.94,769.00 h8.33 M430.11,764.83 v8.33 M476.47,769.00 h8.33 M480.64,764.83 v8.33 M535.34,769.00 h8.33 M539.51,764.83 v8.33 M570.66,769.00 h8.33 M574.83,764.83 v8.33 M631.00,769.00 h8.33 M635.17,764.83 v8.33 M973.91,769.00 h8.33 M978.08,764.83 v8.33 M1070.06,769.00 h8.33 M1074.23,764.83 v8.33 M1109.31,769.00 h8.33 M1113.47,764.83 v8.33 M1177.99,769.00 h8.33 M1182.15,764.83 v8.33 M1256.48,769.00 h8.33 M1260.65,764.83 v8.33 M1467.42,769.00 h8.33 M1471.59,764.83 v8.33 M427.41,752.00 h8.33 M431.58,747.83 v8.33 M540.24,752.00 h8.33 M544.41,747.83 v8.33 M574.58,752.00 h8.33 M578.75,747.83 v8.33 M703.61,752.00 h8.33 M707.77,747.83 v8.33 M1094.59,752.00 h8.33 M1098.76,747.83 v8.33 M1271.20,752.00 h8.33 M1275.36,747.83 v8.33 M1477.24,752.00 h8.33 M1481.40,747.83 v8.33 M437.22,736.00 h8.33 M441.39,731.83 v8.33 M631.00,736.00 h8.33 M635.17,731.83 v8.33 M1038.67,736.00 h8.33 M1042.83,731.83 v8.33 M1168.18,736.00 h8.33 M1172.34,731.83 v8.33 M1274.63,736.00 h8.33 M1278.80,731.83 v8.33 M1496.86,736.00 h8.33 M1501.03,731.83 v8.33 M599.11,720.00 h8.33 M603.28,715.83 v8.33 M726.66,720.00 h8.33 M730.83,715.83 v8.33 M1187.80,720.00 h8.33 M1191.97,715.83 v8.33 M1271.20,720.00 h8.33 M1275.36,715.83 v8.33 M687.42,703.00 h8.33 M691.58,698.83 v8.33 M1101.95,703.00 h8.33 M1106.12,698.83 v8.33 M1207.42,703.00 h8.33 M1211.59,698.83 v8.33 M1300.63,703.00 h8.33 M1304.80,698.83 v8.33 M1119.12,687.00 h8.33 M1123.29,682.83 v8.33" stroke="#fff" stroke-width="2.083" fill="none"/>
<text transform="translate(117.11,831.50) translate(-10.01,0) scale(0.9605,1.0596)" font-family="'Liberation Sans',sans-serif" font-size="10.42" fill="#fff">KSE</text>
<text transform="translate(254.47,831.50) translate(-9.63,0) scale(0.9882,1.0596)" font-family="'Liberation Sans',sans-serif" font-size="10.42" fill="#fff">ETA</text>
<text transform="translate(494.85,831.50) translate(-11.10,0) scale(1.0370,1.0596)" font-family="'Liberation Sans',sans-serif" font-size="10.42" fill="#fff">NZC</text>
<text transform="translate(710.71,831.50) translate(-11.38,0) scale(1.0351,1.0596)" font-family="'Liberation Sans',sans-serif" font-size="10.42" fill="#fff">NDA</text>
<text transform="translate(852.97,831.50) translate(-9.74,0) scale(0.9345,1.0596)" font-family="'Liberation Sans',sans-serif" font-size="10.42" fill="#fff">SPE</text>
<text transform="translate(946.18,831.50) translate(-11.19,0) scale(1.0180,1.0596)" font-family="'Liberation Sans',sans-serif" font-size="10.42" fill="#fff">ARD</text>
<text transform="translate(1024.67,831.50) translate(-10.62,0) scale(0.9654,1.0596)" font-family="'Liberation Sans',sans-serif" font-size="10.42" fill="#fff">EGE</text>
<text transform="translate(1142.41,831.50) translate(-10.24,0) scale(1.0202,1.0596)" font-family="'Liberation Sans',sans-serif" font-size="10.42" fill="#fff">NTA</text>
<text transform="translate(1284.67,831.50) translate(-12.49,0) scale(1.0279,1.0596)" font-family="'Liberation Sans',sans-serif" font-size="10.42" fill="#fff">MON</text>
<text transform="translate(1343.54,831.50) translate(-10.74,0) scale(0.9768,1.0596)" font-family="'Liberation Sans',sans-serif" font-size="10.42" fill="#fff">URS</text>
<text transform="translate(1412.22,831.50) translate(-10.66,0) scale(0.9966,1.0596)" font-family="'Liberation Sans',sans-serif" font-size="10.42" fill="#fff">AHY</text>
<text transform="translate(1485.81,831.50) translate(-12.34,0) scale(1.0159,1.0596)" font-family="'Liberation Sans',sans-serif" font-size="10.42" fill="#fff">GUM</text>
<text transform="translate(1534.87,831.50) translate(-11.20,0) scale(0.9931,1.0596)" font-family="'Liberation Sans',sans-serif" font-size="10.42" fill="#fff">OHY</text>
<text transform="translate(1736.00,831.50) translate(-10.78,0) scale(1.0063,1.0596)" font-family="'Liberation Sans',sans-serif" font-size="10.42" fill="#fff">XHE</text>
<text transform="translate(1770.34,831.50) translate(-8.39,0) scale(0.9994,1.0596)" font-family="'Liberation Sans',sans-serif" font-size="10.42" fill="#fff">EVI</text>
<text transform="translate(175.98,815.17) translate(-10.37,0) scale(1.0327,1.0596)" font-family="'Liberation Sans',sans-serif" font-size="10.42" fill="#fff">AVB</text>
<text transform="translate(254.47,815.17) translate(-8.68,0) scale(0.9191,1.0596)" font-family="'Liberation Sans',sans-serif" font-size="10.42" fill="#fff">ELY</text>
<text transform="translate(323.15,815.17) translate(-11.69,0) scale(1.0104,1.0596)" font-family="'Liberation Sans',sans-serif" font-size="10.42" fill="#fff">CAM</text>
<text transform="translate(431.08,815.17) translate(-10.65,0) scale(0.9678,1.0596)" font-family="'Liberation Sans',sans-serif" font-size="10.42" fill="#fff">SSG</text>
<text transform="translate(578.25,815.17) translate(-10.34,0) scale(0.9655,1.0596)" font-family="'Liberation Sans',sans-serif" font-size="10.42" fill="#fff">PCA</text>
<text transform="translate(720.52,815.17) translate(-11.39,0) scale(1.0355,1.0596)" font-family="'Liberation Sans',sans-serif" font-size="10.42" fill="#fff">AUD</text>
<text transform="translate(808.82,815.17) translate(-10.99,0) scale(1.0000,1.0596)" font-family="'Liberation Sans',sans-serif" font-size="10.42" fill="#fff">AUR</text>
<text transform="translate(931.46,815.17) translate(-10.88,0) scale(1.0165,1.0596)" font-family="'Liberation Sans',sans-serif" font-size="10.42" fill="#fff">DSX</text>
<text transform="translate(1009.95,815.17) translate(-11.55,0) scale(0.9977,1.0596)" font-family="'Liberation Sans',sans-serif" font-size="10.42" fill="#fff">OCU</text>
<text transform="translate(1137.50,815.17) translate(-11.01,0) scale(0.9755,1.0596)" font-family="'Liberation Sans',sans-serif" font-size="10.42" fill="#fff">OER</text>
<text transform="translate(1255.24,815.17) translate(-11.44,0) scale(1.0403,1.0596)" font-family="'Liberation Sans',sans-serif" font-size="10.42" fill="#fff">DKD</text>
<text transform="translate(1304.30,815.17) translate(-10.88,0) scale(1.0161,1.0596)" font-family="'Liberation Sans',sans-serif" font-size="10.42" fill="#fff">DSV</text>
<text transform="translate(1353.35,815.17) translate(-8.95,0) scale(0.9477,1.0596)" font-family="'Liberation Sans',sans-serif" font-size="10.42" fill="#fff">ALY</text>
<text transform="translate(1407.32,815.17) translate(-8.27,0) scale(0.8915,1.0596)" font-family="'Liberation Sans',sans-serif" font-size="10.42" fill="#fff">JLE</text>
<text transform="translate(1471.09,815.17) translate(-10.58,0) scale(0.9621,1.0596)" font-family="'Liberation Sans',sans-serif" font-size="10.42" fill="#fff">SCC</text>
<text transform="translate(1559.39,815.17) translate(-9.85,0) scale(0.9722,1.0596)" font-family="'Liberation Sans',sans-serif" font-size="10.42" fill="#fff">FEV</text>
<text transform="translate(175.98,798.84) translate(-9.01,0) scale(0.9246,1.0596)" font-family="'Liberation Sans',sans-serif" font-size="10.42" fill="#fff">LYR</text>
<text transform="translate(372.21,798.84) translate(-10.21,0) scale(0.9285,1.0596)" font-family="'Liberation Sans',sans-serif" font-size="10.42" fill="#fff">JMC</text>
<text transform="translate(558.63,798.84) translate(-8.51,0) scale(0.8626,1.0596)" font-family="'Liberation Sans',sans-serif" font-size="10.42" fill="#fff">JPE</text>
<text transform="translate(671.46,798.84) translate(-10.18,0) scale(0.9864,1.0596)" font-family="'Liberation Sans',sans-serif" font-size="10.42" fill="#fff">PAU</text>
<text transform="translate(774.48,798.84) translate(-9.00,0) scale(1.0360,1.0596)" font-family="'Liberation Sans',sans-serif" font-size="10.42" fill="#fff">NIA</text>
<text transform="translate(1049.20,798.84) translate(-9.65,0) scale(0.9898,1.0596)" font-family="'Liberation Sans',sans-serif" font-size="10.42" fill="#fff">STA</text>
<text transform="translate(1206.18,798.84) translate(-12.10,0) scale(1.0193,1.0596)" font-family="'Liberation Sans',sans-serif" font-size="10.42" fill="#fff">NOO</text>
<text transform="translate(1353.35,798.84) translate(-12.23,0) scale(1.0064,1.0596)" font-family="'Liberation Sans',sans-serif" font-size="10.42" fill="#fff">COM</text>
<text transform="translate(1471.09,798.84) translate(-11.17,0) scale(0.9898,1.0596)" font-family="'Liberation Sans',sans-serif" font-size="10.42" fill="#fff">NCC</text>
<text transform="translate(1564.30,798.84) translate(-10.30,0) scale(0.9885,1.0596)" font-family="'Liberation Sans',sans-serif" font-size="10.42" fill="#fff">FED</text>
<text transform="translate(205.42,782.51) translate(-9.02,0) scale(1.0384,1.0596)" font-family="'Liberation Sans',sans-serif" font-size="10.42" fill="#fff">HVI</text>
<text transform="translate(411.46,782.51) translate(-8.72,0) scale(1.0042,1.0596)" font-family="'Liberation Sans',sans-serif" font-size="10.42" fill="#fff">ARI</text>
<text transform="translate(529.19,782.51) translate(-10.51,0) scale(1.0090,1.0596)" font-family="'Liberation Sans',sans-serif" font-size="10.42" fill="#fff">SZC</text>
<text transform="translate(617.50,782.51) translate(-10.34,0) scale(0.9655,1.0596)" font-family="'Liberation Sans',sans-serif" font-size="10.42" fill="#fff">CAP</text>
<text transform="translate(818.63,782.51) translate(-11.00,0) scale(1.0005,1.0596)" font-family="'Liberation Sans',sans-serif" font-size="10.42" fill="#fff">NUE</text>
<text transform="translate(960.90,782.51) translate(-10.92,0) scale(0.9943,1.0596)" font-family="'Liberation Sans',sans-serif" font-size="10.42" fill="#fff">OCT</text>
<text transform="translate(1059.01,782.51) translate(-9.25,0) scale(0.9994,1.0596)" font-family="'Liberation Sans',sans-serif" font-size="10.42" fill="#fff">ORI</text>
<text transform="translate(1186.56,782.51) translate(-12.16,0) scale(1.0246,1.0596)" font-family="'Liberation Sans',sans-serif" font-size="10.42" fill="#fff">AMO</text>
<text transform="translate(1255.24,782.51) translate(-10.79,0) scale(0.9811,1.0596)" font-family="'Liberation Sans',sans-serif" font-size="10.42" fill="#fff">DPC</text>
<text transform="translate(1328.83,782.51) translate(-8.67,0) scale(1.0323,1.0596)" font-family="'Liberation Sans',sans-serif" font-size="10.42" fill="#fff">XVI</text>
<text transform="translate(1407.32,782.51) translate(-11.47,0) scale(1.0166,1.0596)" font-family="'Liberation Sans',sans-serif" font-size="10.42" fill="#fff">QUA</text>
<text transform="translate(1559.39,782.51) translate(-11.17,0) scale(1.0428,1.0596)" font-family="'Liberation Sans',sans-serif" font-size="10.42" fill="#fff">AAN</text>
<text transform="translate(352.59,766.18) translate(-10.29,0) scale(1.0239,1.0596)" font-family="'Liberation Sans',sans-serif" font-size="10.42" fill="#fff">TAH</text>
<text transform="translate(431.08,766.18) translate(-8.93,0) scale(0.9068,1.0596)" font-family="'Liberation Sans',sans-serif" font-size="10.42" fill="#fff">JEA</text>
<text transform="translate(480.14,766.18) translate(-6.75,0) scale(0.8616,1.0596)" font-family="'Liberation Sans',sans-serif" font-size="10.42" fill="#fff">JIP</text>
<text transform="translate(539.01,766.18) translate(-9.59,0) scale(0.9200,1.0596)" font-family="'Liberation Sans',sans-serif" font-size="10.42" fill="#fff">PPS</text>
<text transform="translate(578.25,766.18) translate(-10.51,0) scale(1.0090,1.0596)" font-family="'Liberation Sans',sans-serif" font-size="10.42" fill="#fff">ZCS</text>
<text transform="translate(632.21,766.18) translate(-11.67,0) scale(1.0081,1.0596)" font-family="'Liberation Sans',sans-serif" font-size="10.42" fill="#fff">GDR</text>
<text transform="translate(970.71,766.18) translate(-10.98,0) scale(0.9986,1.0596)" font-family="'Liberation Sans',sans-serif" font-size="10.42" fill="#fff">DRA</text>
<text transform="translate(1073.73,766.18) translate(-10.95,0) scale(0.9957,1.0596)" font-family="'Liberation Sans',sans-serif" font-size="10.42" fill="#fff">LUM</text>
<text transform="translate(1112.97,766.18) translate(-10.57,0) scale(0.9616,1.0596)" font-family="'Liberation Sans',sans-serif" font-size="10.42" fill="#fff">RPU</text>
<text transform="translate(1176.75,766.18) translate(-10.69,0) scale(1.0250,1.0596)" font-family="'Liberation Sans',sans-serif" font-size="10.42" fill="#fff">THA</text>
<text transform="translate(1260.15,766.18) translate(-10.26,0) scale(0.9582,1.0596)" font-family="'Liberation Sans',sans-serif" font-size="10.42" fill="#fff">PSU</text>
<text transform="translate(1471.09,766.18) translate(-10.40,0) scale(0.9713,1.0596)" font-family="'Liberation Sans',sans-serif" font-size="10.42" fill="#fff">XCB</text>
<text transform="translate(431.08,749.85) translate(-9.07,0) scale(0.8693,1.0596)" font-family="'Liberation Sans',sans-serif" font-size="10.42" fill="#fff">JRC</text>
<text transform="translate(543.91,749.85) translate(-11.10,0) scale(1.0090,1.0596)" font-family="'Liberation Sans',sans-serif" font-size="10.42" fill="#fff">CAN</text>
<text transform="translate(578.25,749.85) translate(-9.98,0) scale(0.9851,1.0596)" font-family="'Liberation Sans',sans-serif" font-size="10.42" fill="#fff">FAN</text>
<text transform="translate(681.27,749.85) translate(-10.05,0) scale(0.9387,1.0596)" font-family="'Liberation Sans',sans-serif" font-size="10.42" fill="#fff">PER</text>
<text transform="translate(1049.20,749.85) translate(-9.98,0) scale(0.9948,1.0596)" font-family="'Liberation Sans',sans-serif" font-size="10.42" fill="#fff">CTA</text>
<text transform="translate(1265.05,749.85) translate(-11.11,0) scale(1.0104,1.0596)" font-family="'Liberation Sans',sans-serif" font-size="10.42" fill="#fff">HYD</text>
<text transform="translate(1480.90,749.85) translate(-11.87,0) scale(1.0261,1.0596)" font-family="'Liberation Sans',sans-serif" font-size="10.42" fill="#fff">XUM</text>
<text transform="translate(440.89,733.52) translate(-11.36,0) scale(0.9811,1.0596)" font-family="'Liberation Sans',sans-serif" font-size="10.42" fill="#fff">COR</text>
<text transform="translate(656.74,733.52) translate(-10.79,0) scale(1.0073,1.0596)" font-family="'Liberation Sans',sans-serif" font-size="10.42" fill="#fff">SDA</text>
<text transform="translate(1049.20,733.52) translate(-8.93,0) scale(1.0288,1.0596)" font-family="'Liberation Sans',sans-serif" font-size="10.42" fill="#fff">LMI</text>
<text transform="translate(1166.94,733.52) translate(-10.29,0) scale(0.9875,1.0596)" font-family="'Liberation Sans',sans-serif" font-size="10.42" fill="#fff">LEO</text>
<text transform="translate(1274.86,733.52) translate(-10.39,0) scale(0.9713,1.0596)" font-family="'Liberation Sans',sans-serif" font-size="10.42" fill="#fff">EHY</text>
<text transform="translate(1500.53,733.52) translate(-10.49,0) scale(0.9796,1.0596)" font-family="'Liberation Sans',sans-serif" font-size="10.42" fill="#fff">ECV</text>
<text transform="translate(602.78,717.19) translate(-9.21,0) scale(0.9357,1.0596)" font-family="'Liberation Sans',sans-serif" font-size="10.42" fill="#fff">JXA</text>
<text transform="translate(715.61,717.19) translate(-10.80,0) scale(0.9571,1.0596)" font-family="'Liberation Sans',sans-serif" font-size="10.42" fill="#fff">KCG</text>
<text transform="translate(1157.13,717.19) translate(-11.47,0) scale(1.0431,1.0596)" font-family="'Liberation Sans',sans-serif" font-size="10.42" fill="#fff">AND</text>
<text transform="translate(1274.86,717.19) translate(-11.49,0) scale(1.0455,1.0596)" font-family="'Liberation Sans',sans-serif" font-size="10.42" fill="#fff">DAD</text>
<text transform="translate(666.55,700.86) translate(-8.45,0) scale(0.9730,1.0596)" font-family="'Liberation Sans',sans-serif" font-size="10.42" fill="#fff">ERI</text>
<text transform="translate(1108.07,700.86) translate(-10.22,0) scale(1.0087,1.0596)" font-family="'Liberation Sans',sans-serif" font-size="10.42" fill="#fff">SLD</text>
<text transform="translate(1211.09,700.86) translate(-11.02,0) scale(0.9769,1.0596)" font-family="'Liberation Sans',sans-serif" font-size="10.42" fill="#fff">ORS</text>
<text transform="translate(1299.39,700.86) translate(-11.82,0) scale(0.9965,1.0596)" font-family="'Liberation Sans',sans-serif" font-size="10.42" fill="#fff">GEM</text>
<text transform="translate(1122.79,684.53) translate(-11.58,0) scale(1.0009,1.0596)" font-family="'Liberation Sans',sans-serif" font-size="10.42" fill="#fff">KUM</text>
<rect x="19.5" y="641.5" width="1766" height="201" fill="none" stroke="#fff" stroke-width="1" shape-rendering="crispEdges"/>
<path d="M19.50,842.50 v5.36 M265.50,842.50 v5.36 M510.50,842.50 v5.36 M755.50,842.50 v5.36 M1000.50,842.50 v5.36 M1246.50,842.50 v5.36 M1491.50,842.50 v5.36 M1736.50,842.50 v5.36" stroke="#fff" stroke-width="1.111" fill="none"/>
<text transform="translate(19.50,862.12) translate(-4.42,0) scale(1.1439,1.0596)" font-family="'Liberation Sans',sans-serif" font-size="13.89" fill="#fff">0</text>
<text transform="translate(265.50,862.12) translate(-8.84,0) scale(1.1439,1.0596)" font-family="'Liberation Sans',sans-serif" font-size="13.89" fill="#fff">50</text>
<text transform="translate(510.50,862.12) translate(-13.25,0) scale(1.1445,1.0596)" font-family="'Liberation Sans',sans-serif" font-size="13.89" fill="#fff">100</text>
<text transform="translate(755.50,862.12) translate(-13.25,0) scale(1.1445,1.0596)" font-family="'Liberation Sans',sans-serif" font-size="13.89" fill="#fff">150</text>
<text transform="translate(1000.50,862.12) translate(-13.25,0) scale(1.1445,1.0596)" font-family="'Liberation Sans',sans-serif" font-size="13.89" fill="#fff">200</text>
<text transform="translate(1246.50,862.12) translate(-13.25,0) scale(1.1445,1.0596)" font-family="'Liberation Sans',sans-serif" font-size="13.89" fill="#fff">250</text>
<text transform="translate(1491.50,862.12) translate(-13.25,0) scale(1.1445,1.0596)" font-family="'Liberation Sans',sans-serif" font-size="13.89" fill="#fff">300</text>
<text transform="translate(1736.50,862.12) translate(-13.25,0) scale(1.1445,1.0596)" font-family="'Liberation Sans',sans-serif" font-size="13.89" fill="#fff">350</text>
<text transform="translate(902.50,882.30) translate(-73.34,0) scale(1.1375,1.0596)" font-family="'Liberation Sans',sans-serif" font-size="13.89" fill="#fff">Solar longitude (deg)</text>
</svg></body></html>
